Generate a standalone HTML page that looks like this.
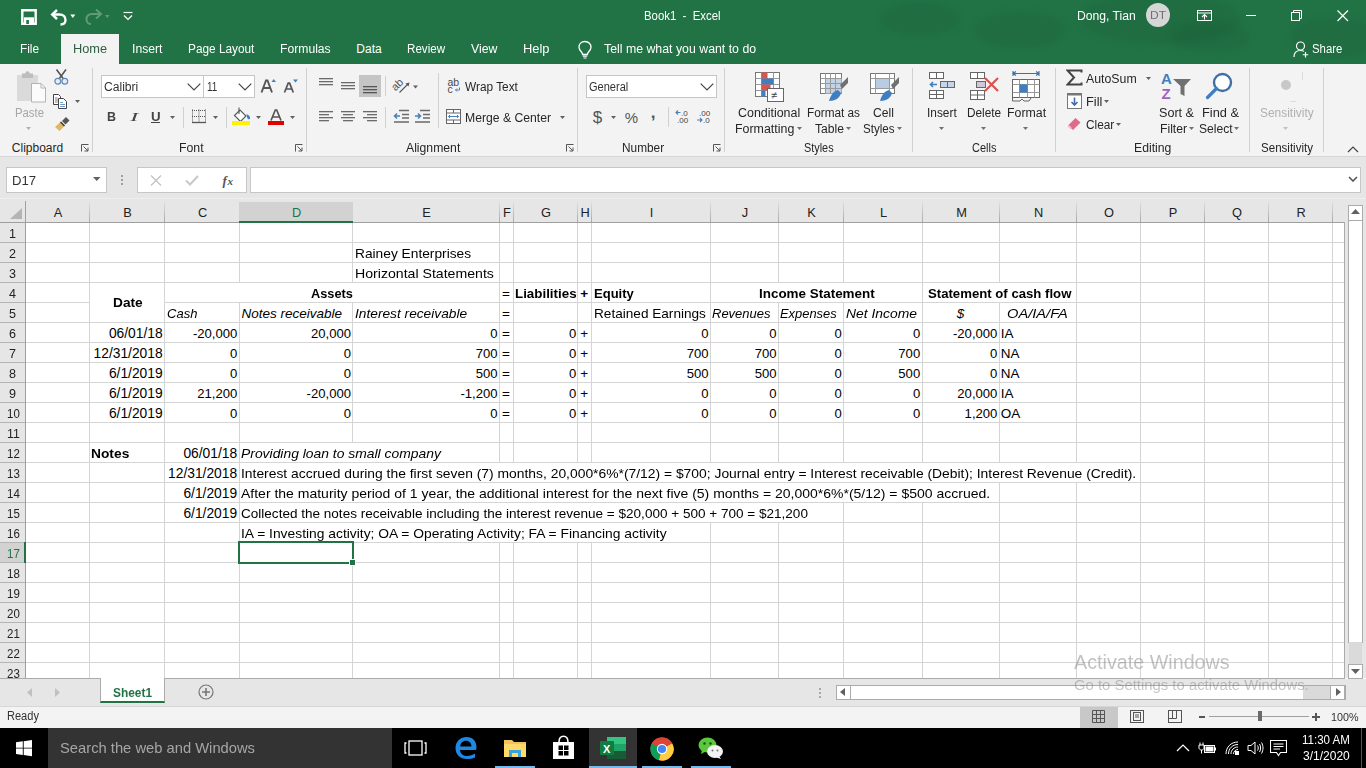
<!DOCTYPE html>
<html><head><meta charset="utf-8"><title>Book1 - Excel</title>
<style>
html,body{margin:0;padding:0;width:1366px;height:768px;overflow:hidden;background:#fff;position:relative;font-family:"Liberation Sans",sans-serif;}
</style></head><body>
<div style="position:absolute;left:0px;top:0px;width:1366px;height:64px;background:#217346;"></div>
<div style="position:absolute;left:880px;top:2px;width:80px;height:34px;border-radius:50%;background:rgba(20,70,40,0.13);filter:blur(3px);"></div>
<div style="position:absolute;left:975px;top:12px;width:90px;height:36px;border-radius:50%;background:rgba(20,70,40,0.13);filter:blur(3px);"></div>
<div style="position:absolute;left:1080px;top:-6px;width:160px;height:50px;border-radius:50%;background:rgba(20,70,40,0.13);filter:blur(3px);"></div>
<div style="position:absolute;left:1170px;top:22px;width:80px;height:30px;border-radius:50%;background:rgba(20,70,40,0.13);filter:blur(3px);"></div>
<div style="position:absolute;left:1290px;top:18px;width:90px;height:40px;border-radius:50%;background:rgba(20,70,40,0.13);filter:blur(3px);"></div>
<div style="position:absolute;left:0px;top:64px;width:1366px;height:92px;background:#f3f3f3;"></div>
<div style="position:absolute;left:0px;top:156px;width:1366px;height:1px;background:#d5d5d5;"></div>
<div style="position:absolute;left:0px;top:157px;width:1366px;height:43px;background:#e6e6e6;"></div>
<div style="position:absolute;left:0px;top:200px;width:1366px;height:23px;background:#e6e6e6;"></div>
<div style="position:absolute;left:26px;top:223px;width:1318px;height:455px;background:#ffffff;"></div>
<div style="position:absolute;left:0px;top:223px;width:25px;height:455px;background:#e6e6e6;"></div>
<div style="position:absolute;left:89px;top:223px;width:1px;height:455px;background:#d5d5d5;"></div>
<div style="position:absolute;left:164px;top:223px;width:1px;height:455px;background:#d5d5d5;"></div>
<div style="position:absolute;left:239px;top:223px;width:1px;height:60px;background:#d5d5d5;"></div>
<div style="position:absolute;left:239px;top:303px;width:1px;height:375px;background:#d5d5d5;"></div>
<div style="position:absolute;left:352px;top:223px;width:1px;height:60px;background:#d5d5d5;"></div>
<div style="position:absolute;left:352px;top:303px;width:1px;height:140px;background:#d5d5d5;"></div>
<div style="position:absolute;left:352px;top:543px;width:1px;height:135px;background:#d5d5d5;"></div>
<div style="position:absolute;left:499px;top:223px;width:1px;height:240px;background:#d5d5d5;"></div>
<div style="position:absolute;left:499px;top:543px;width:1px;height:135px;background:#d5d5d5;"></div>
<div style="position:absolute;left:513px;top:223px;width:1px;height:240px;background:#d5d5d5;"></div>
<div style="position:absolute;left:513px;top:543px;width:1px;height:135px;background:#d5d5d5;"></div>
<div style="position:absolute;left:577px;top:223px;width:1px;height:240px;background:#d5d5d5;"></div>
<div style="position:absolute;left:577px;top:543px;width:1px;height:135px;background:#d5d5d5;"></div>
<div style="position:absolute;left:591px;top:223px;width:1px;height:240px;background:#d5d5d5;"></div>
<div style="position:absolute;left:591px;top:543px;width:1px;height:135px;background:#d5d5d5;"></div>
<div style="position:absolute;left:710px;top:223px;width:1px;height:240px;background:#d5d5d5;"></div>
<div style="position:absolute;left:710px;top:523px;width:1px;height:155px;background:#d5d5d5;"></div>
<div style="position:absolute;left:778px;top:223px;width:1px;height:60px;background:#d5d5d5;"></div>
<div style="position:absolute;left:778px;top:303px;width:1px;height:160px;background:#d5d5d5;"></div>
<div style="position:absolute;left:778px;top:523px;width:1px;height:155px;background:#d5d5d5;"></div>
<div style="position:absolute;left:843px;top:223px;width:1px;height:60px;background:#d5d5d5;"></div>
<div style="position:absolute;left:843px;top:303px;width:1px;height:160px;background:#d5d5d5;"></div>
<div style="position:absolute;left:843px;top:503px;width:1px;height:175px;background:#d5d5d5;"></div>
<div style="position:absolute;left:922px;top:223px;width:1px;height:240px;background:#d5d5d5;"></div>
<div style="position:absolute;left:922px;top:503px;width:1px;height:175px;background:#d5d5d5;"></div>
<div style="position:absolute;left:999px;top:223px;width:1px;height:60px;background:#d5d5d5;"></div>
<div style="position:absolute;left:999px;top:303px;width:1px;height:160px;background:#d5d5d5;"></div>
<div style="position:absolute;left:999px;top:483px;width:1px;height:195px;background:#d5d5d5;"></div>
<div style="position:absolute;left:1076px;top:223px;width:1px;height:240px;background:#d5d5d5;"></div>
<div style="position:absolute;left:1076px;top:483px;width:1px;height:195px;background:#d5d5d5;"></div>
<div style="position:absolute;left:1140px;top:223px;width:1px;height:455px;background:#d5d5d5;"></div>
<div style="position:absolute;left:1204px;top:223px;width:1px;height:455px;background:#d5d5d5;"></div>
<div style="position:absolute;left:1268px;top:223px;width:1px;height:455px;background:#d5d5d5;"></div>
<div style="position:absolute;left:1332px;top:223px;width:1px;height:455px;background:#d5d5d5;"></div>
<div style="position:absolute;left:26px;top:242px;width:1318px;height:1px;background:#d5d5d5;"></div>
<div style="position:absolute;left:26px;top:262px;width:1318px;height:1px;background:#d5d5d5;"></div>
<div style="position:absolute;left:26px;top:282px;width:1318px;height:1px;background:#d5d5d5;"></div>
<div style="position:absolute;left:26px;top:302px;width:64px;height:1px;background:#d5d5d5;"></div>
<div style="position:absolute;left:165px;top:302px;width:1179px;height:1px;background:#d5d5d5;"></div>
<div style="position:absolute;left:26px;top:322px;width:1318px;height:1px;background:#d5d5d5;"></div>
<div style="position:absolute;left:26px;top:342px;width:1318px;height:1px;background:#d5d5d5;"></div>
<div style="position:absolute;left:26px;top:362px;width:1318px;height:1px;background:#d5d5d5;"></div>
<div style="position:absolute;left:26px;top:382px;width:1318px;height:1px;background:#d5d5d5;"></div>
<div style="position:absolute;left:26px;top:402px;width:1318px;height:1px;background:#d5d5d5;"></div>
<div style="position:absolute;left:26px;top:422px;width:1318px;height:1px;background:#d5d5d5;"></div>
<div style="position:absolute;left:26px;top:442px;width:1318px;height:1px;background:#d5d5d5;"></div>
<div style="position:absolute;left:26px;top:462px;width:1318px;height:1px;background:#d5d5d5;"></div>
<div style="position:absolute;left:26px;top:482px;width:1318px;height:1px;background:#d5d5d5;"></div>
<div style="position:absolute;left:26px;top:502px;width:1318px;height:1px;background:#d5d5d5;"></div>
<div style="position:absolute;left:26px;top:522px;width:1318px;height:1px;background:#d5d5d5;"></div>
<div style="position:absolute;left:26px;top:542px;width:1318px;height:1px;background:#d5d5d5;"></div>
<div style="position:absolute;left:26px;top:562px;width:1318px;height:1px;background:#d5d5d5;"></div>
<div style="position:absolute;left:26px;top:582px;width:1318px;height:1px;background:#d5d5d5;"></div>
<div style="position:absolute;left:26px;top:602px;width:1318px;height:1px;background:#d5d5d5;"></div>
<div style="position:absolute;left:26px;top:622px;width:1318px;height:1px;background:#d5d5d5;"></div>
<div style="position:absolute;left:26px;top:642px;width:1318px;height:1px;background:#d5d5d5;"></div>
<div style="position:absolute;left:26px;top:662px;width:1318px;height:1px;background:#d5d5d5;"></div>
<div style="position:absolute;left:0px;top:198px;width:1366px;height:1px;background:#eeeeee;"></div>
<div style="position:absolute;left:89px;top:201px;width:1px;height:21px;background:linear-gradient(#e2e2e2,#a9a9a9);"></div>
<div style="position:absolute;left:164px;top:201px;width:1px;height:21px;background:linear-gradient(#e2e2e2,#a9a9a9);"></div>
<div style="position:absolute;left:239px;top:201px;width:1px;height:21px;background:linear-gradient(#e2e2e2,#a9a9a9);"></div>
<div style="position:absolute;left:352px;top:201px;width:1px;height:21px;background:linear-gradient(#e2e2e2,#a9a9a9);"></div>
<div style="position:absolute;left:499px;top:201px;width:1px;height:21px;background:linear-gradient(#e2e2e2,#a9a9a9);"></div>
<div style="position:absolute;left:513px;top:201px;width:1px;height:21px;background:linear-gradient(#e2e2e2,#a9a9a9);"></div>
<div style="position:absolute;left:577px;top:201px;width:1px;height:21px;background:linear-gradient(#e2e2e2,#a9a9a9);"></div>
<div style="position:absolute;left:591px;top:201px;width:1px;height:21px;background:linear-gradient(#e2e2e2,#a9a9a9);"></div>
<div style="position:absolute;left:710px;top:201px;width:1px;height:21px;background:linear-gradient(#e2e2e2,#a9a9a9);"></div>
<div style="position:absolute;left:778px;top:201px;width:1px;height:21px;background:linear-gradient(#e2e2e2,#a9a9a9);"></div>
<div style="position:absolute;left:843px;top:201px;width:1px;height:21px;background:linear-gradient(#e2e2e2,#a9a9a9);"></div>
<div style="position:absolute;left:922px;top:201px;width:1px;height:21px;background:linear-gradient(#e2e2e2,#a9a9a9);"></div>
<div style="position:absolute;left:999px;top:201px;width:1px;height:21px;background:linear-gradient(#e2e2e2,#a9a9a9);"></div>
<div style="position:absolute;left:1076px;top:201px;width:1px;height:21px;background:linear-gradient(#e2e2e2,#a9a9a9);"></div>
<div style="position:absolute;left:1140px;top:201px;width:1px;height:21px;background:linear-gradient(#e2e2e2,#a9a9a9);"></div>
<div style="position:absolute;left:1204px;top:201px;width:1px;height:21px;background:linear-gradient(#e2e2e2,#a9a9a9);"></div>
<div style="position:absolute;left:1268px;top:201px;width:1px;height:21px;background:linear-gradient(#e2e2e2,#a9a9a9);"></div>
<div style="position:absolute;left:1332px;top:201px;width:1px;height:21px;background:linear-gradient(#e2e2e2,#a9a9a9);"></div>
<div style="position:absolute;left:0px;top:222px;width:1344px;height:1px;background:#9f9f9f;"></div>
<div style="position:absolute;left:25px;top:201px;width:1px;height:477px;background:#9f9f9f;"></div>
<div style="position:absolute;left:0px;top:242px;width:25px;height:1px;background:#b4b4b4;"></div>
<div style="position:absolute;left:0px;top:262px;width:25px;height:1px;background:#b4b4b4;"></div>
<div style="position:absolute;left:0px;top:282px;width:25px;height:1px;background:#b4b4b4;"></div>
<div style="position:absolute;left:0px;top:302px;width:25px;height:1px;background:#b4b4b4;"></div>
<div style="position:absolute;left:0px;top:322px;width:25px;height:1px;background:#b4b4b4;"></div>
<div style="position:absolute;left:0px;top:342px;width:25px;height:1px;background:#b4b4b4;"></div>
<div style="position:absolute;left:0px;top:362px;width:25px;height:1px;background:#b4b4b4;"></div>
<div style="position:absolute;left:0px;top:382px;width:25px;height:1px;background:#b4b4b4;"></div>
<div style="position:absolute;left:0px;top:402px;width:25px;height:1px;background:#b4b4b4;"></div>
<div style="position:absolute;left:0px;top:422px;width:25px;height:1px;background:#b4b4b4;"></div>
<div style="position:absolute;left:0px;top:442px;width:25px;height:1px;background:#b4b4b4;"></div>
<div style="position:absolute;left:0px;top:462px;width:25px;height:1px;background:#b4b4b4;"></div>
<div style="position:absolute;left:0px;top:482px;width:25px;height:1px;background:#b4b4b4;"></div>
<div style="position:absolute;left:0px;top:502px;width:25px;height:1px;background:#b4b4b4;"></div>
<div style="position:absolute;left:0px;top:522px;width:25px;height:1px;background:#b4b4b4;"></div>
<div style="position:absolute;left:0px;top:542px;width:25px;height:1px;background:#b4b4b4;"></div>
<div style="position:absolute;left:0px;top:562px;width:25px;height:1px;background:#b4b4b4;"></div>
<div style="position:absolute;left:0px;top:582px;width:25px;height:1px;background:#b4b4b4;"></div>
<div style="position:absolute;left:0px;top:602px;width:25px;height:1px;background:#b4b4b4;"></div>
<div style="position:absolute;left:0px;top:622px;width:25px;height:1px;background:#b4b4b4;"></div>
<div style="position:absolute;left:0px;top:642px;width:25px;height:1px;background:#b4b4b4;"></div>
<div style="position:absolute;left:0px;top:662px;width:25px;height:1px;background:#b4b4b4;"></div>
<div style="position:absolute;left:1344px;top:222px;width:1px;height:456px;background:#ababab;"></div>
<div style="position:absolute;left:0px;top:678px;width:1345px;height:1px;background:#ababab;"></div>
<div style="position:absolute;left:239px;top:202px;width:114px;height:19px;background:#d2d2d2;"></div>
<div style="position:absolute;left:239px;top:221px;width:114px;height:2px;background:#217346;"></div>
<div style="position:absolute;left:0px;top:543px;width:24px;height:19px;background:#d2d2d2;"></div>
<div style="position:absolute;left:24px;top:542px;width:2px;height:21px;background:#217346;"></div>
<svg style="position:absolute;left:9px;top:207px;" width="14" height="13" viewBox="0 0 14 13"><path d="M13 1 L13 12 L1 12 Z" fill="#b4b4b4"/></svg>
<div style="position:absolute;left:53.73px;top:204.00px;line-height:17px;color:#222;font-family:'Liberation Sans',sans-serif;font-size:12.8px;font-weight:400;font-style:normal;white-space:pre;">A</div>
<div style="position:absolute;left:123.23px;top:204.00px;line-height:17px;color:#222;font-family:'Liberation Sans',sans-serif;font-size:12.8px;font-weight:400;font-style:normal;white-space:pre;">B</div>
<div style="position:absolute;left:197.88px;top:204.00px;line-height:17px;color:#222;font-family:'Liberation Sans',sans-serif;font-size:12.8px;font-weight:400;font-style:normal;white-space:pre;">C</div>
<div style="position:absolute;left:291.88px;top:204.00px;line-height:17px;color:#217346;font-family:'Liberation Sans',sans-serif;font-size:12.8px;font-weight:400;font-style:normal;white-space:pre;">D</div>
<div style="position:absolute;left:422.23px;top:204.00px;line-height:17px;color:#222;font-family:'Liberation Sans',sans-serif;font-size:12.8px;font-weight:400;font-style:normal;white-space:pre;">E</div>
<div style="position:absolute;left:503.09px;top:204.00px;line-height:17px;color:#222;font-family:'Liberation Sans',sans-serif;font-size:12.8px;font-weight:400;font-style:normal;white-space:pre;">F</div>
<div style="position:absolute;left:541.02px;top:204.00px;line-height:17px;color:#222;font-family:'Liberation Sans',sans-serif;font-size:12.8px;font-weight:400;font-style:normal;white-space:pre;">G</div>
<div style="position:absolute;left:580.38px;top:204.00px;line-height:17px;color:#222;font-family:'Liberation Sans',sans-serif;font-size:12.8px;font-weight:400;font-style:normal;white-space:pre;">H</div>
<div style="position:absolute;left:649.72px;top:204.00px;line-height:17px;color:#222;font-family:'Liberation Sans',sans-serif;font-size:12.8px;font-weight:400;font-style:normal;white-space:pre;">I</div>
<div style="position:absolute;left:741.80px;top:204.00px;line-height:17px;color:#222;font-family:'Liberation Sans',sans-serif;font-size:12.8px;font-weight:400;font-style:normal;white-space:pre;">J</div>
<div style="position:absolute;left:807.23px;top:204.00px;line-height:17px;color:#222;font-family:'Liberation Sans',sans-serif;font-size:12.8px;font-weight:400;font-style:normal;white-space:pre;">K</div>
<div style="position:absolute;left:879.94px;top:204.00px;line-height:17px;color:#222;font-family:'Liberation Sans',sans-serif;font-size:12.8px;font-weight:400;font-style:normal;white-space:pre;">L</div>
<div style="position:absolute;left:956.16px;top:204.00px;line-height:17px;color:#222;font-family:'Liberation Sans',sans-serif;font-size:12.8px;font-weight:400;font-style:normal;white-space:pre;">M</div>
<div style="position:absolute;left:1033.88px;top:204.00px;line-height:17px;color:#222;font-family:'Liberation Sans',sans-serif;font-size:12.8px;font-weight:400;font-style:normal;white-space:pre;">N</div>
<div style="position:absolute;left:1104.02px;top:204.00px;line-height:17px;color:#222;font-family:'Liberation Sans',sans-serif;font-size:12.8px;font-weight:400;font-style:normal;white-space:pre;">O</div>
<div style="position:absolute;left:1168.73px;top:204.00px;line-height:17px;color:#222;font-family:'Liberation Sans',sans-serif;font-size:12.8px;font-weight:400;font-style:normal;white-space:pre;">P</div>
<div style="position:absolute;left:1232.02px;top:204.00px;line-height:17px;color:#222;font-family:'Liberation Sans',sans-serif;font-size:12.8px;font-weight:400;font-style:normal;white-space:pre;">Q</div>
<div style="position:absolute;left:1296.38px;top:204.00px;line-height:17px;color:#222;font-family:'Liberation Sans',sans-serif;font-size:12.8px;font-weight:400;font-style:normal;white-space:pre;">R</div>
<div style="position:absolute;left:9.10px;top:225.00px;line-height:17px;color:#222;font-family:'Liberation Sans',sans-serif;font-size:12.8px;font-weight:400;font-style:normal;white-space:pre;transform:scaleX(0.9825);transform-origin:left top;">1</div>
<div style="position:absolute;left:9.10px;top:245.00px;line-height:17px;color:#222;font-family:'Liberation Sans',sans-serif;font-size:12.8px;font-weight:400;font-style:normal;white-space:pre;transform:scaleX(0.9825);transform-origin:left top;">2</div>
<div style="position:absolute;left:9.10px;top:265.00px;line-height:17px;color:#222;font-family:'Liberation Sans',sans-serif;font-size:12.8px;font-weight:400;font-style:normal;white-space:pre;transform:scaleX(0.9825);transform-origin:left top;">3</div>
<div style="position:absolute;left:9.10px;top:285.00px;line-height:17px;color:#222;font-family:'Liberation Sans',sans-serif;font-size:12.8px;font-weight:400;font-style:normal;white-space:pre;transform:scaleX(0.9825);transform-origin:left top;">4</div>
<div style="position:absolute;left:9.10px;top:305.00px;line-height:17px;color:#222;font-family:'Liberation Sans',sans-serif;font-size:12.8px;font-weight:400;font-style:normal;white-space:pre;transform:scaleX(0.9825);transform-origin:left top;">5</div>
<div style="position:absolute;left:9.10px;top:325.00px;line-height:17px;color:#222;font-family:'Liberation Sans',sans-serif;font-size:12.8px;font-weight:400;font-style:normal;white-space:pre;transform:scaleX(0.9825);transform-origin:left top;">6</div>
<div style="position:absolute;left:9.10px;top:345.00px;line-height:17px;color:#222;font-family:'Liberation Sans',sans-serif;font-size:12.8px;font-weight:400;font-style:normal;white-space:pre;transform:scaleX(0.9825);transform-origin:left top;">7</div>
<div style="position:absolute;left:9.10px;top:365.00px;line-height:17px;color:#222;font-family:'Liberation Sans',sans-serif;font-size:12.8px;font-weight:400;font-style:normal;white-space:pre;transform:scaleX(0.9825);transform-origin:left top;">8</div>
<div style="position:absolute;left:9.10px;top:385.00px;line-height:17px;color:#222;font-family:'Liberation Sans',sans-serif;font-size:12.8px;font-weight:400;font-style:normal;white-space:pre;transform:scaleX(0.9825);transform-origin:left top;">9</div>
<div style="position:absolute;left:6.80px;top:405.00px;line-height:17px;color:#222;font-family:'Liberation Sans',sans-serif;font-size:12.8px;font-weight:400;font-style:normal;white-space:pre;transform:scaleX(0.8992);transform-origin:left top;">10</div>
<div style="position:absolute;left:6.80px;top:425.00px;line-height:17px;color:#222;font-family:'Liberation Sans',sans-serif;font-size:12.8px;font-weight:400;font-style:normal;white-space:pre;transform:scaleX(0.9626);transform-origin:left top;">11</div>
<div style="position:absolute;left:6.80px;top:445.00px;line-height:17px;color:#222;font-family:'Liberation Sans',sans-serif;font-size:12.8px;font-weight:400;font-style:normal;white-space:pre;transform:scaleX(0.8992);transform-origin:left top;">12</div>
<div style="position:absolute;left:6.80px;top:465.00px;line-height:17px;color:#222;font-family:'Liberation Sans',sans-serif;font-size:12.8px;font-weight:400;font-style:normal;white-space:pre;transform:scaleX(0.8992);transform-origin:left top;">13</div>
<div style="position:absolute;left:6.80px;top:485.00px;line-height:17px;color:#222;font-family:'Liberation Sans',sans-serif;font-size:12.8px;font-weight:400;font-style:normal;white-space:pre;transform:scaleX(0.8992);transform-origin:left top;">14</div>
<div style="position:absolute;left:6.80px;top:505.00px;line-height:17px;color:#222;font-family:'Liberation Sans',sans-serif;font-size:12.8px;font-weight:400;font-style:normal;white-space:pre;transform:scaleX(0.8992);transform-origin:left top;">15</div>
<div style="position:absolute;left:6.80px;top:525.00px;line-height:17px;color:#222;font-family:'Liberation Sans',sans-serif;font-size:12.8px;font-weight:400;font-style:normal;white-space:pre;transform:scaleX(0.8992);transform-origin:left top;">16</div>
<div style="position:absolute;left:6.80px;top:545.00px;line-height:17px;color:#217346;font-family:'Liberation Sans',sans-serif;font-size:12.8px;font-weight:400;font-style:normal;white-space:pre;transform:scaleX(0.8992);transform-origin:left top;">17</div>
<div style="position:absolute;left:6.80px;top:565.00px;line-height:17px;color:#222;font-family:'Liberation Sans',sans-serif;font-size:12.8px;font-weight:400;font-style:normal;white-space:pre;transform:scaleX(0.8992);transform-origin:left top;">18</div>
<div style="position:absolute;left:6.80px;top:585.00px;line-height:17px;color:#222;font-family:'Liberation Sans',sans-serif;font-size:12.8px;font-weight:400;font-style:normal;white-space:pre;transform:scaleX(0.8992);transform-origin:left top;">19</div>
<div style="position:absolute;left:6.80px;top:605.00px;line-height:17px;color:#222;font-family:'Liberation Sans',sans-serif;font-size:12.8px;font-weight:400;font-style:normal;white-space:pre;transform:scaleX(0.8992);transform-origin:left top;">20</div>
<div style="position:absolute;left:6.80px;top:625.00px;line-height:17px;color:#222;font-family:'Liberation Sans',sans-serif;font-size:12.8px;font-weight:400;font-style:normal;white-space:pre;transform:scaleX(0.8992);transform-origin:left top;">21</div>
<div style="position:absolute;left:6.80px;top:645.00px;line-height:17px;color:#222;font-family:'Liberation Sans',sans-serif;font-size:12.8px;font-weight:400;font-style:normal;white-space:pre;transform:scaleX(0.8992);transform-origin:left top;">22</div>
<div style="position:absolute;left:6.80px;top:665.00px;line-height:17px;color:#222;font-family:'Liberation Sans',sans-serif;font-size:12.8px;font-weight:400;font-style:normal;white-space:pre;transform:scaleX(0.8992);transform-origin:left top;">23</div>
<div style="position:absolute;left:1345px;top:200px;width:21px;height:478px;background:#e6e6e6;"></div>
<div style="position:absolute;left:354.50px;top:245.00px;line-height:18px;color:#000;font-family:'Liberation Sans',sans-serif;font-size:13.5px;font-weight:400;font-style:normal;white-space:pre;transform:scaleX(1.0179);transform-origin:left top;">Rainey Enterprises</div>
<div style="position:absolute;left:354.50px;top:265.00px;line-height:18px;color:#000;font-family:'Liberation Sans',sans-serif;font-size:13.5px;font-weight:400;font-style:normal;white-space:pre;transform:scaleX(1.0458);transform-origin:left top;">Horizontal Statements</div>
<div style="position:absolute;left:311.00px;top:285.00px;line-height:18px;color:#000;font-family:'Liberation Sans',sans-serif;font-size:13.5px;font-weight:700;font-style:normal;white-space:pre;transform:scaleX(0.9440);transform-origin:left top;">Assets</div>
<div style="position:absolute;left:112.50px;top:294.00px;line-height:18px;color:#000;font-family:'Liberation Sans',sans-serif;font-size:13.5px;font-weight:700;font-style:normal;white-space:pre;transform:scaleX(1.0148);transform-origin:left top;">Date</div>
<div style="position:absolute;left:502.05px;top:285.00px;line-height:18px;color:#000;font-family:'Liberation Sans',sans-serif;font-size:13.5px;font-weight:400;font-style:normal;white-space:pre;">=</div>
<div style="position:absolute;left:515.10px;top:285.00px;line-height:18px;color:#000;font-family:'Liberation Sans',sans-serif;font-size:13.5px;font-weight:700;font-style:normal;white-space:pre;transform:scaleX(0.9891);transform-origin:left top;">Liabilities</div>
<div style="position:absolute;left:580.15px;top:285.00px;line-height:18px;color:#000;font-family:'Liberation Sans',sans-serif;font-size:13.5px;font-weight:700;font-style:normal;white-space:pre;">+</div>
<div style="position:absolute;left:593.60px;top:285.00px;line-height:18px;color:#000;font-family:'Liberation Sans',sans-serif;font-size:13.5px;font-weight:700;font-style:normal;white-space:pre;transform:scaleX(0.9645);transform-origin:left top;">Equity</div>
<div style="position:absolute;left:759.00px;top:285.00px;line-height:18px;color:#000;font-family:'Liberation Sans',sans-serif;font-size:13.5px;font-weight:700;font-style:normal;white-space:pre;transform:scaleX(0.9950);transform-origin:left top;">Income Statement</div>
<div style="position:absolute;left:928.00px;top:285.00px;line-height:18px;color:#000;font-family:'Liberation Sans',sans-serif;font-size:13.5px;font-weight:700;font-style:normal;white-space:pre;transform:scaleX(0.9753);transform-origin:left top;">Statement of cash flow</div>
<div style="position:absolute;left:166.70px;top:305.00px;line-height:18px;color:#000;font-family:'Liberation Sans',sans-serif;font-size:13.5px;font-weight:400;font-style:italic;white-space:pre;transform:scaleX(0.9646);transform-origin:left top;">Cash</div>
<div style="position:absolute;left:241.50px;top:305.00px;line-height:18px;color:#000;font-family:'Liberation Sans',sans-serif;font-size:13.5px;font-weight:400;font-style:italic;white-space:pre;">Notes receivable</div>
<div style="position:absolute;left:354.50px;top:305.00px;line-height:18px;color:#000;font-family:'Liberation Sans',sans-serif;font-size:13.5px;font-weight:400;font-style:italic;white-space:pre;transform:scaleX(1.0162);transform-origin:left top;">Interest receivable</div>
<div style="position:absolute;left:502.05px;top:305.00px;line-height:18px;color:#000;font-family:'Liberation Sans',sans-serif;font-size:13.5px;font-weight:400;font-style:normal;white-space:pre;">=</div>
<div style="position:absolute;left:593.60px;top:305.00px;line-height:18px;color:#000;font-family:'Liberation Sans',sans-serif;font-size:13.5px;font-weight:400;font-style:normal;white-space:pre;transform:scaleX(1.0074);transform-origin:left top;">Retained Earnings</div>
<div style="position:absolute;left:712.30px;top:305.00px;line-height:18px;color:#000;font-family:'Liberation Sans',sans-serif;font-size:13.5px;font-weight:400;font-style:italic;white-space:pre;transform:scaleX(0.9622);transform-origin:left top;">Revenues</div>
<div style="position:absolute;left:780.30px;top:305.00px;line-height:18px;color:#000;font-family:'Liberation Sans',sans-serif;font-size:13.5px;font-weight:400;font-style:italic;white-space:pre;transform:scaleX(0.9562);transform-origin:left top;">Expenses</div>
<div style="position:absolute;left:845.60px;top:305.00px;line-height:18px;color:#000;font-family:'Liberation Sans',sans-serif;font-size:13.5px;font-weight:400;font-style:italic;white-space:pre;transform:scaleX(1.0271);transform-origin:left top;">Net Income</div>
<div style="position:absolute;left:956.79px;top:305.00px;line-height:18px;color:#000;font-family:'Liberation Sans',sans-serif;font-size:13.5px;font-weight:400;font-style:italic;white-space:pre;">$</div>
<div style="position:absolute;left:1006.50px;top:305.00px;line-height:18px;color:#000;font-family:'Liberation Sans',sans-serif;font-size:13.5px;font-weight:400;font-style:italic;white-space:pre;transform:scaleX(1.0854);transform-origin:left top;">OA/IA/FA</div>
<div style="position:absolute;left:108.88px;top:325.00px;line-height:18px;color:#000;font-family:'Liberation Sans',sans-serif;font-size:13.8px;font-weight:400;font-style:normal;white-space:pre;">06/01/18</div>
<div style="position:absolute;left:192.88px;top:325.00px;line-height:17px;color:#000;font-family:'Liberation Sans',sans-serif;font-size:13.1px;font-weight:400;font-style:normal;white-space:pre;">-20,000</div>
<div style="position:absolute;left:310.94px;top:325.00px;line-height:17px;color:#000;font-family:'Liberation Sans',sans-serif;font-size:13.1px;font-weight:400;font-style:normal;white-space:pre;">20,000</div>
<div style="position:absolute;left:490.30px;top:325.00px;line-height:17px;color:#000;font-family:'Liberation Sans',sans-serif;font-size:13.1px;font-weight:400;font-style:normal;white-space:pre;">0</div>
<div style="position:absolute;left:569.00px;top:325.00px;line-height:17px;color:#000;font-family:'Liberation Sans',sans-serif;font-size:13.1px;font-weight:400;font-style:normal;white-space:pre;">0</div>
<div style="position:absolute;left:701.20px;top:325.00px;line-height:17px;color:#000;font-family:'Liberation Sans',sans-serif;font-size:13.1px;font-weight:400;font-style:normal;white-space:pre;">0</div>
<div style="position:absolute;left:769.20px;top:325.00px;line-height:17px;color:#000;font-family:'Liberation Sans',sans-serif;font-size:13.1px;font-weight:400;font-style:normal;white-space:pre;">0</div>
<div style="position:absolute;left:834.50px;top:325.00px;line-height:17px;color:#000;font-family:'Liberation Sans',sans-serif;font-size:13.1px;font-weight:400;font-style:normal;white-space:pre;">0</div>
<div style="position:absolute;left:912.90px;top:325.00px;line-height:17px;color:#000;font-family:'Liberation Sans',sans-serif;font-size:13.1px;font-weight:400;font-style:normal;white-space:pre;">0</div>
<div style="position:absolute;left:952.98px;top:325.00px;line-height:17px;color:#000;font-family:'Liberation Sans',sans-serif;font-size:13.1px;font-weight:400;font-style:normal;white-space:pre;">-20,000</div>
<div style="position:absolute;left:502.05px;top:325.00px;line-height:18px;color:#000;font-family:'Liberation Sans',sans-serif;font-size:13.5px;font-weight:400;font-style:normal;white-space:pre;">=</div>
<div style="position:absolute;left:580.15px;top:325.00px;line-height:18px;color:#000;font-family:'Liberation Sans',sans-serif;font-size:13.5px;font-weight:400;font-style:normal;white-space:pre;">+</div>
<div style="position:absolute;left:1000.70px;top:325.00px;line-height:18px;color:#000;font-family:'Liberation Sans',sans-serif;font-size:13.5px;font-weight:400;font-style:normal;white-space:pre;">IA</div>
<div style="position:absolute;left:93.54px;top:345.00px;line-height:18px;color:#000;font-family:'Liberation Sans',sans-serif;font-size:13.8px;font-weight:400;font-style:normal;white-space:pre;">12/31/2018</div>
<div style="position:absolute;left:230.00px;top:345.00px;line-height:17px;color:#000;font-family:'Liberation Sans',sans-serif;font-size:13.1px;font-weight:400;font-style:normal;white-space:pre;">0</div>
<div style="position:absolute;left:343.70px;top:345.00px;line-height:17px;color:#000;font-family:'Liberation Sans',sans-serif;font-size:13.1px;font-weight:400;font-style:normal;white-space:pre;">0</div>
<div style="position:absolute;left:475.74px;top:345.00px;line-height:17px;color:#000;font-family:'Liberation Sans',sans-serif;font-size:13.1px;font-weight:400;font-style:normal;white-space:pre;">700</div>
<div style="position:absolute;left:569.00px;top:345.00px;line-height:17px;color:#000;font-family:'Liberation Sans',sans-serif;font-size:13.1px;font-weight:400;font-style:normal;white-space:pre;">0</div>
<div style="position:absolute;left:686.64px;top:345.00px;line-height:17px;color:#000;font-family:'Liberation Sans',sans-serif;font-size:13.1px;font-weight:400;font-style:normal;white-space:pre;">700</div>
<div style="position:absolute;left:754.64px;top:345.00px;line-height:17px;color:#000;font-family:'Liberation Sans',sans-serif;font-size:13.1px;font-weight:400;font-style:normal;white-space:pre;">700</div>
<div style="position:absolute;left:834.50px;top:345.00px;line-height:17px;color:#000;font-family:'Liberation Sans',sans-serif;font-size:13.1px;font-weight:400;font-style:normal;white-space:pre;">0</div>
<div style="position:absolute;left:898.34px;top:345.00px;line-height:17px;color:#000;font-family:'Liberation Sans',sans-serif;font-size:13.1px;font-weight:400;font-style:normal;white-space:pre;">700</div>
<div style="position:absolute;left:990.10px;top:345.00px;line-height:17px;color:#000;font-family:'Liberation Sans',sans-serif;font-size:13.1px;font-weight:400;font-style:normal;white-space:pre;">0</div>
<div style="position:absolute;left:502.05px;top:345.00px;line-height:18px;color:#000;font-family:'Liberation Sans',sans-serif;font-size:13.5px;font-weight:400;font-style:normal;white-space:pre;">=</div>
<div style="position:absolute;left:580.15px;top:345.00px;line-height:18px;color:#000;font-family:'Liberation Sans',sans-serif;font-size:13.5px;font-weight:400;font-style:normal;white-space:pre;">+</div>
<div style="position:absolute;left:1000.70px;top:345.00px;line-height:18px;color:#000;font-family:'Liberation Sans',sans-serif;font-size:13.5px;font-weight:400;font-style:normal;white-space:pre;">NA</div>
<div style="position:absolute;left:108.88px;top:365.00px;line-height:18px;color:#000;font-family:'Liberation Sans',sans-serif;font-size:13.8px;font-weight:400;font-style:normal;white-space:pre;">6/1/2019</div>
<div style="position:absolute;left:230.00px;top:365.00px;line-height:17px;color:#000;font-family:'Liberation Sans',sans-serif;font-size:13.1px;font-weight:400;font-style:normal;white-space:pre;">0</div>
<div style="position:absolute;left:343.70px;top:365.00px;line-height:17px;color:#000;font-family:'Liberation Sans',sans-serif;font-size:13.1px;font-weight:400;font-style:normal;white-space:pre;">0</div>
<div style="position:absolute;left:475.74px;top:365.00px;line-height:17px;color:#000;font-family:'Liberation Sans',sans-serif;font-size:13.1px;font-weight:400;font-style:normal;white-space:pre;">500</div>
<div style="position:absolute;left:569.00px;top:365.00px;line-height:17px;color:#000;font-family:'Liberation Sans',sans-serif;font-size:13.1px;font-weight:400;font-style:normal;white-space:pre;">0</div>
<div style="position:absolute;left:686.64px;top:365.00px;line-height:17px;color:#000;font-family:'Liberation Sans',sans-serif;font-size:13.1px;font-weight:400;font-style:normal;white-space:pre;">500</div>
<div style="position:absolute;left:754.64px;top:365.00px;line-height:17px;color:#000;font-family:'Liberation Sans',sans-serif;font-size:13.1px;font-weight:400;font-style:normal;white-space:pre;">500</div>
<div style="position:absolute;left:834.50px;top:365.00px;line-height:17px;color:#000;font-family:'Liberation Sans',sans-serif;font-size:13.1px;font-weight:400;font-style:normal;white-space:pre;">0</div>
<div style="position:absolute;left:898.34px;top:365.00px;line-height:17px;color:#000;font-family:'Liberation Sans',sans-serif;font-size:13.1px;font-weight:400;font-style:normal;white-space:pre;">500</div>
<div style="position:absolute;left:990.10px;top:365.00px;line-height:17px;color:#000;font-family:'Liberation Sans',sans-serif;font-size:13.1px;font-weight:400;font-style:normal;white-space:pre;">0</div>
<div style="position:absolute;left:502.05px;top:365.00px;line-height:18px;color:#000;font-family:'Liberation Sans',sans-serif;font-size:13.5px;font-weight:400;font-style:normal;white-space:pre;">=</div>
<div style="position:absolute;left:580.15px;top:365.00px;line-height:18px;color:#000;font-family:'Liberation Sans',sans-serif;font-size:13.5px;font-weight:400;font-style:normal;white-space:pre;">+</div>
<div style="position:absolute;left:1000.70px;top:365.00px;line-height:18px;color:#000;font-family:'Liberation Sans',sans-serif;font-size:13.5px;font-weight:400;font-style:normal;white-space:pre;">NA</div>
<div style="position:absolute;left:108.88px;top:385.00px;line-height:18px;color:#000;font-family:'Liberation Sans',sans-serif;font-size:13.8px;font-weight:400;font-style:normal;white-space:pre;">6/1/2019</div>
<div style="position:absolute;left:197.24px;top:385.00px;line-height:17px;color:#000;font-family:'Liberation Sans',sans-serif;font-size:13.1px;font-weight:400;font-style:normal;white-space:pre;">21,200</div>
<div style="position:absolute;left:306.58px;top:385.00px;line-height:17px;color:#000;font-family:'Liberation Sans',sans-serif;font-size:13.1px;font-weight:400;font-style:normal;white-space:pre;">-20,000</div>
<div style="position:absolute;left:460.46px;top:385.00px;line-height:17px;color:#000;font-family:'Liberation Sans',sans-serif;font-size:13.1px;font-weight:400;font-style:normal;white-space:pre;">-1,200</div>
<div style="position:absolute;left:569.00px;top:385.00px;line-height:17px;color:#000;font-family:'Liberation Sans',sans-serif;font-size:13.1px;font-weight:400;font-style:normal;white-space:pre;">0</div>
<div style="position:absolute;left:701.20px;top:385.00px;line-height:17px;color:#000;font-family:'Liberation Sans',sans-serif;font-size:13.1px;font-weight:400;font-style:normal;white-space:pre;">0</div>
<div style="position:absolute;left:769.20px;top:385.00px;line-height:17px;color:#000;font-family:'Liberation Sans',sans-serif;font-size:13.1px;font-weight:400;font-style:normal;white-space:pre;">0</div>
<div style="position:absolute;left:834.50px;top:385.00px;line-height:17px;color:#000;font-family:'Liberation Sans',sans-serif;font-size:13.1px;font-weight:400;font-style:normal;white-space:pre;">0</div>
<div style="position:absolute;left:912.90px;top:385.00px;line-height:17px;color:#000;font-family:'Liberation Sans',sans-serif;font-size:13.1px;font-weight:400;font-style:normal;white-space:pre;">0</div>
<div style="position:absolute;left:957.34px;top:385.00px;line-height:17px;color:#000;font-family:'Liberation Sans',sans-serif;font-size:13.1px;font-weight:400;font-style:normal;white-space:pre;">20,000</div>
<div style="position:absolute;left:502.05px;top:385.00px;line-height:18px;color:#000;font-family:'Liberation Sans',sans-serif;font-size:13.5px;font-weight:400;font-style:normal;white-space:pre;">=</div>
<div style="position:absolute;left:580.15px;top:385.00px;line-height:18px;color:#000;font-family:'Liberation Sans',sans-serif;font-size:13.5px;font-weight:400;font-style:normal;white-space:pre;">+</div>
<div style="position:absolute;left:1000.70px;top:385.00px;line-height:18px;color:#000;font-family:'Liberation Sans',sans-serif;font-size:13.5px;font-weight:400;font-style:normal;white-space:pre;">IA</div>
<div style="position:absolute;left:108.88px;top:405.00px;line-height:18px;color:#000;font-family:'Liberation Sans',sans-serif;font-size:13.8px;font-weight:400;font-style:normal;white-space:pre;">6/1/2019</div>
<div style="position:absolute;left:230.00px;top:405.00px;line-height:17px;color:#000;font-family:'Liberation Sans',sans-serif;font-size:13.1px;font-weight:400;font-style:normal;white-space:pre;">0</div>
<div style="position:absolute;left:343.70px;top:405.00px;line-height:17px;color:#000;font-family:'Liberation Sans',sans-serif;font-size:13.1px;font-weight:400;font-style:normal;white-space:pre;">0</div>
<div style="position:absolute;left:490.30px;top:405.00px;line-height:17px;color:#000;font-family:'Liberation Sans',sans-serif;font-size:13.1px;font-weight:400;font-style:normal;white-space:pre;">0</div>
<div style="position:absolute;left:569.00px;top:405.00px;line-height:17px;color:#000;font-family:'Liberation Sans',sans-serif;font-size:13.1px;font-weight:400;font-style:normal;white-space:pre;">0</div>
<div style="position:absolute;left:701.20px;top:405.00px;line-height:17px;color:#000;font-family:'Liberation Sans',sans-serif;font-size:13.1px;font-weight:400;font-style:normal;white-space:pre;">0</div>
<div style="position:absolute;left:769.20px;top:405.00px;line-height:17px;color:#000;font-family:'Liberation Sans',sans-serif;font-size:13.1px;font-weight:400;font-style:normal;white-space:pre;">0</div>
<div style="position:absolute;left:834.50px;top:405.00px;line-height:17px;color:#000;font-family:'Liberation Sans',sans-serif;font-size:13.1px;font-weight:400;font-style:normal;white-space:pre;">0</div>
<div style="position:absolute;left:912.90px;top:405.00px;line-height:17px;color:#000;font-family:'Liberation Sans',sans-serif;font-size:13.1px;font-weight:400;font-style:normal;white-space:pre;">0</div>
<div style="position:absolute;left:964.62px;top:405.00px;line-height:17px;color:#000;font-family:'Liberation Sans',sans-serif;font-size:13.1px;font-weight:400;font-style:normal;white-space:pre;">1,200</div>
<div style="position:absolute;left:502.05px;top:405.00px;line-height:18px;color:#000;font-family:'Liberation Sans',sans-serif;font-size:13.5px;font-weight:400;font-style:normal;white-space:pre;">=</div>
<div style="position:absolute;left:580.15px;top:405.00px;line-height:18px;color:#000;font-family:'Liberation Sans',sans-serif;font-size:13.5px;font-weight:400;font-style:normal;white-space:pre;">+</div>
<div style="position:absolute;left:1000.70px;top:405.00px;line-height:18px;color:#000;font-family:'Liberation Sans',sans-serif;font-size:13.5px;font-weight:400;font-style:normal;white-space:pre;">OA</div>
<div style="position:absolute;left:91.20px;top:445.00px;line-height:18px;color:#000;font-family:'Liberation Sans',sans-serif;font-size:13.5px;font-weight:700;font-style:normal;white-space:pre;transform:scaleX(1.0209);transform-origin:left top;">Notes</div>
<div style="position:absolute;left:183.38px;top:445.00px;line-height:18px;color:#000;font-family:'Liberation Sans',sans-serif;font-size:13.8px;font-weight:400;font-style:normal;white-space:pre;">06/01/18</div>
<div style="position:absolute;left:168.04px;top:465.00px;line-height:18px;color:#000;font-family:'Liberation Sans',sans-serif;font-size:13.8px;font-weight:400;font-style:normal;white-space:pre;">12/31/2018</div>
<div style="position:absolute;left:183.38px;top:485.00px;line-height:18px;color:#000;font-family:'Liberation Sans',sans-serif;font-size:13.8px;font-weight:400;font-style:normal;white-space:pre;">6/1/2019</div>
<div style="position:absolute;left:183.38px;top:505.00px;line-height:18px;color:#000;font-family:'Liberation Sans',sans-serif;font-size:13.8px;font-weight:400;font-style:normal;white-space:pre;">6/1/2019</div>
<div style="position:absolute;left:241.40px;top:445.00px;line-height:18px;color:#000;font-family:'Liberation Sans',sans-serif;font-size:13.5px;font-weight:400;font-style:italic;white-space:pre;transform:scaleX(1.0285);transform-origin:left top;">Providing loan to small company</div>
<div style="position:absolute;left:241.40px;top:465.00px;line-height:18px;color:#000;font-family:'Liberation Sans',sans-serif;font-size:13.5px;font-weight:400;font-style:normal;white-space:pre;transform:scaleX(1.0267);transform-origin:left top;">Interest accrued during the first seven (7) months, 20,000*6%*(7/12) = $700; Journal entry = Interest receivable (Debit); Interest Revenue (Credit).</div>
<div style="position:absolute;left:241.40px;top:485.00px;line-height:18px;color:#000;font-family:'Liberation Sans',sans-serif;font-size:13.5px;font-weight:400;font-style:normal;white-space:pre;transform:scaleX(1.0366);transform-origin:left top;">After the maturity period of 1 year, the additional interest for the next five (5) months = 20,000*6%*(5/12) = $500 accrued.</div>
<div style="position:absolute;left:241.40px;top:505.00px;line-height:18px;color:#000;font-family:'Liberation Sans',sans-serif;font-size:13.5px;font-weight:400;font-style:normal;white-space:pre;transform:scaleX(1.0031);transform-origin:left top;">Collected the notes receivable including the interest revenue = $20,000 + 500 + 700 = $21,200</div>
<div style="position:absolute;left:241.40px;top:525.00px;line-height:18px;color:#000;font-family:'Liberation Sans',sans-serif;font-size:13.5px;font-weight:400;font-style:normal;white-space:pre;transform:scaleX(1.0247);transform-origin:left top;">IA = Investing activity; OA = Operating Activity; FA = Financing activity</div>
<div style="position:absolute;left:238px;top:541px;width:112px;height:19px;border:2px solid #217346;"></div>
<div style="position:absolute;left:349px;top:559px;width:7px;height:7px;background:#fff;"></div>
<div style="position:absolute;left:350px;top:560px;width:5px;height:5px;background:#217346;"></div>
<div style="position:absolute;left:643.70px;top:8.00px;line-height:16px;color:#fff;font-family:'Liberation Sans',sans-serif;font-size:12.5px;font-weight:400;font-style:normal;white-space:pre;transform:scaleX(0.9111);transform-origin:left top;">Book1  -  Excel</div>
<div style="position:absolute;left:1076.90px;top:8.00px;line-height:16px;color:#fff;font-family:'Liberation Sans',sans-serif;font-size:12.5px;font-weight:400;font-style:normal;white-space:pre;transform:scaleX(0.9724);transform-origin:left top;">Dong, Tian</div>
<div style="position:absolute;left:1146px;top:3px;width:24px;height:24px;border-radius:50%;background:#d6d6d6;"></div>
<div style="position:absolute;left:1149.70px;top:8.00px;line-height:15px;color:#707070;font-family:'Liberation Sans',sans-serif;font-size:11.5px;font-weight:400;font-style:normal;white-space:pre;transform:scaleX(1.0493);transform-origin:left top;">DT</div>
<svg style="position:absolute;left:21px;top:9px;" width="16" height="16" viewBox="0 0 16 16"><path d="M1.3 1.3 H14.7 V14.7 H1.3 Z" fill="none" stroke="#fff" stroke-width="2.4"/><rect x="3" y="8.3" width="10" height="6.5" fill="#fff"/><rect x="5.3" y="11" width="2.6" height="4" fill="#217346"/></svg>
<svg style="position:absolute;left:50px;top:8px;" width="28" height="18" viewBox="0 0 28 18"><path d="M3 6.5 H9.5 C13.5 6.5 15.5 9 15.5 12 C15.5 15 13.5 16.5 10.5 16.5" fill="none" stroke="#fff" stroke-width="2.4"/><path d="M7 2 L2.2 6.5 L7 11" fill="none" stroke="#fff" stroke-width="2.4"/><path d="M20.3 6.5 H25.3 L22.8 10 Z" fill="#fff"/></svg>
<svg style="position:absolute;left:85px;top:8px;" width="28" height="18" viewBox="0 0 28 18"><path d="M15 6 H7 C3 6 1.5 8.5 1.5 11.5 C1.5 14.5 4 16 6 16" fill="none" stroke="#5f9b78" stroke-width="2"/><path d="M11 1.5 L16 6 L11 10.5" fill="none" stroke="#5f9b78" stroke-width="2"/><path d="M20 7 H24.5 L22.25 10 Z" fill="#5f9b78"/></svg>
<svg style="position:absolute;left:122px;top:11px;" width="12" height="10" viewBox="0 0 12 10"><path d="M1.5 1.5 H10.5" stroke="#fff" stroke-width="1.2"/><path d="M2 4.5 L6 8.5 L10 4.5" fill="none" stroke="#fff" stroke-width="1.2"/></svg>
<svg style="position:absolute;left:1197px;top:10px;" width="16" height="12" viewBox="0 0 16 12"><rect x="0.5" y="0.5" width="14" height="10" fill="none" stroke="#fff" stroke-width="1"/><path d="M0.5 3 H14.5" stroke="#fff"/><path d="M7.5 9.5 V4.5 M5 7 L7.5 4.5 L10 7" fill="none" stroke="#fff" stroke-width="1.1"/></svg>
<div style="position:absolute;left:1246px;top:15px;width:10px;height:1px;background:#fff;"></div>
<svg style="position:absolute;left:1291px;top:10px;" width="12" height="12" viewBox="0 0 12 12"><rect x="0.5" y="2.5" width="8" height="8" fill="none" stroke="#fff"/><path d="M2.5 2.5 V0.5 H10.5 V8.5 H8.5" fill="none" stroke="#fff"/></svg>
<svg style="position:absolute;left:1337px;top:10px;" width="12" height="12" viewBox="0 0 12 12"><path d="M0.5 0.5 L11 11 M11 0.5 L0.5 11" stroke="#fff" stroke-width="1.2"/></svg>
<div style="position:absolute;left:61px;top:34px;width:58px;height:30px;background:#f3f3f3;"></div>
<div style="position:absolute;left:19.70px;top:41.00px;line-height:16px;color:#fff;font-family:'Liberation Sans',sans-serif;font-size:12px;font-weight:400;font-style:normal;white-space:pre;transform:scaleX(0.9874);transform-origin:left top;">File</div>
<div style="position:absolute;left:72.70px;top:41.00px;line-height:16px;color:#2f5e43;font-family:'Liberation Sans',sans-serif;font-size:12px;font-weight:400;font-style:normal;white-space:pre;transform:scaleX(1.0651);transform-origin:left top;">Home</div>
<div style="position:absolute;left:132.10px;top:41.00px;line-height:16px;color:#fff;font-family:'Liberation Sans',sans-serif;font-size:12px;font-weight:400;font-style:normal;white-space:pre;transform:scaleX(1.0161);transform-origin:left top;">Insert</div>
<div style="position:absolute;left:188.30px;top:41.00px;line-height:16px;color:#fff;font-family:'Liberation Sans',sans-serif;font-size:12px;font-weight:400;font-style:normal;white-space:pre;transform:scaleX(0.9853);transform-origin:left top;">Page Layout</div>
<div style="position:absolute;left:280.40px;top:41.00px;line-height:16px;color:#fff;font-family:'Liberation Sans',sans-serif;font-size:12px;font-weight:400;font-style:normal;white-space:pre;transform:scaleX(1.0137);transform-origin:left top;">Formulas</div>
<div style="position:absolute;left:356.30px;top:41.00px;line-height:16px;color:#fff;font-family:'Liberation Sans',sans-serif;font-size:12px;font-weight:400;font-style:normal;white-space:pre;">Data</div>
<div style="position:absolute;left:407.40px;top:41.00px;line-height:16px;color:#fff;font-family:'Liberation Sans',sans-serif;font-size:12px;font-weight:400;font-style:normal;white-space:pre;transform:scaleX(0.9680);transform-origin:left top;">Review</div>
<div style="position:absolute;left:470.90px;top:41.00px;line-height:16px;color:#fff;font-family:'Liberation Sans',sans-serif;font-size:12px;font-weight:400;font-style:normal;white-space:pre;transform:scaleX(1.0273);transform-origin:left top;">View</div>
<div style="position:absolute;left:523.10px;top:41.00px;line-height:16px;color:#fff;font-family:'Liberation Sans',sans-serif;font-size:12px;font-weight:400;font-style:normal;white-space:pre;transform:scaleX(1.0734);transform-origin:left top;">Help</div>
<div style="position:absolute;left:603.60px;top:41.00px;line-height:16px;color:#fff;font-family:'Liberation Sans',sans-serif;font-size:12px;font-weight:400;font-style:normal;white-space:pre;transform:scaleX(1.0272);transform-origin:left top;">Tell me what you want to do</div>
<svg style="position:absolute;left:577px;top:40px;" width="16" height="19" viewBox="0 0 16 19"><path d="M8 1.5 C4.2 1.5 2 4.2 2 7.2 C2 9.5 3.3 10.8 4.6 12.2 C5.3 13 5.6 13.6 5.6 14.5 H10.4 C10.4 13.6 10.7 13 11.4 12.2 C12.7 10.8 14 9.5 14 7.2 C14 4.2 11.8 1.5 8 1.5 Z" fill="none" stroke="#fff" stroke-width="1.3"/><path d="M5.8 16.2 H10.2 M6.5 18 H9.5" stroke="#fff" stroke-width="1.2"/></svg>
<svg style="position:absolute;left:1293px;top:41px;" width="17" height="17" viewBox="0 0 17 17"><circle cx="7.5" cy="5" r="4" fill="none" stroke="#fff" stroke-width="1.2"/><path d="M1 16 C1 11.5 3.5 9.5 7.5 9.5 C9 9.5 10 9.8 11 10.3" fill="none" stroke="#fff" stroke-width="1.2"/><path d="M12.5 11 V16.5 M9.75 13.75 H15.25" stroke="#fff" stroke-width="1.2"/></svg>
<div style="position:absolute;left:1312.30px;top:41.00px;line-height:16px;color:#fff;font-family:'Liberation Sans',sans-serif;font-size:12px;font-weight:400;font-style:normal;white-space:pre;transform:scaleX(0.9460);transform-origin:left top;">Share</div>
<div style="position:absolute;left:92px;top:68px;width:1px;height:84px;background:#d0d0d0;"></div>
<div style="position:absolute;left:306px;top:68px;width:1px;height:84px;background:#d0d0d0;"></div>
<div style="position:absolute;left:577px;top:68px;width:1px;height:84px;background:#d0d0d0;"></div>
<div style="position:absolute;left:724px;top:68px;width:1px;height:84px;background:#d0d0d0;"></div>
<div style="position:absolute;left:912px;top:68px;width:1px;height:84px;background:#d0d0d0;"></div>
<div style="position:absolute;left:1055px;top:68px;width:1px;height:84px;background:#d0d0d0;"></div>
<div style="position:absolute;left:1249px;top:68px;width:1px;height:84px;background:#d0d0d0;"></div>
<div style="position:absolute;left:1323px;top:68px;width:1px;height:84px;background:#d0d0d0;"></div>
<div style="position:absolute;left:11.80px;top:140.00px;line-height:16px;color:#262626;font-family:'Liberation Sans',sans-serif;font-size:12px;font-weight:400;font-style:normal;white-space:pre;">Clipboard</div>
<div style="position:absolute;left:178.80px;top:140.00px;line-height:16px;color:#262626;font-family:'Liberation Sans',sans-serif;font-size:12px;font-weight:400;font-style:normal;white-space:pre;transform:scaleX(1.0243);transform-origin:left top;">Font</div>
<div style="position:absolute;left:406.20px;top:140.00px;line-height:16px;color:#262626;font-family:'Liberation Sans',sans-serif;font-size:12px;font-weight:400;font-style:normal;white-space:pre;transform:scaleX(1.0173);transform-origin:left top;">Alignment</div>
<div style="position:absolute;left:621.70px;top:140.00px;line-height:16px;color:#262626;font-family:'Liberation Sans',sans-serif;font-size:12px;font-weight:400;font-style:normal;white-space:pre;transform:scaleX(0.9862);transform-origin:left top;">Number</div>
<div style="position:absolute;left:803.70px;top:140.00px;line-height:16px;color:#262626;font-family:'Liberation Sans',sans-serif;font-size:12px;font-weight:400;font-style:normal;white-space:pre;transform:scaleX(0.9055);transform-origin:left top;">Styles</div>
<div style="position:absolute;left:971.70px;top:140.00px;line-height:16px;color:#262626;font-family:'Liberation Sans',sans-serif;font-size:12px;font-weight:400;font-style:normal;white-space:pre;transform:scaleX(0.9148);transform-origin:left top;">Cells</div>
<div style="position:absolute;left:1133.80px;top:140.00px;line-height:16px;color:#262626;font-family:'Liberation Sans',sans-serif;font-size:12px;font-weight:400;font-style:normal;white-space:pre;transform:scaleX(1.0190);transform-origin:left top;">Editing</div>
<div style="position:absolute;left:1260.80px;top:140.00px;line-height:16px;color:#262626;font-family:'Liberation Sans',sans-serif;font-size:12px;font-weight:400;font-style:normal;white-space:pre;transform:scaleX(0.9624);transform-origin:left top;">Sensitivity</div>
<svg style="position:absolute;left:81px;top:144px;" width="8" height="8" viewBox="0 0 8 8"><path d="M0.5 7.5 V0.5 H7.5" fill="none" stroke="#555" stroke-width="1"/><path d="M2.5 2.5 L7 7 M7 3.5 V7 H3.5" fill="none" stroke="#555" stroke-width="1"/></svg>
<svg style="position:absolute;left:295px;top:144px;" width="8" height="8" viewBox="0 0 8 8"><path d="M0.5 7.5 V0.5 H7.5" fill="none" stroke="#555" stroke-width="1"/><path d="M2.5 2.5 L7 7 M7 3.5 V7 H3.5" fill="none" stroke="#555" stroke-width="1"/></svg>
<svg style="position:absolute;left:566px;top:144px;" width="8" height="8" viewBox="0 0 8 8"><path d="M0.5 7.5 V0.5 H7.5" fill="none" stroke="#555" stroke-width="1"/><path d="M2.5 2.5 L7 7 M7 3.5 V7 H3.5" fill="none" stroke="#555" stroke-width="1"/></svg>
<svg style="position:absolute;left:713px;top:144px;" width="8" height="8" viewBox="0 0 8 8"><path d="M0.5 7.5 V0.5 H7.5" fill="none" stroke="#555" stroke-width="1"/><path d="M2.5 2.5 L7 7 M7 3.5 V7 H3.5" fill="none" stroke="#555" stroke-width="1"/></svg>
<svg style="position:absolute;left:1347px;top:146px;" width="12" height="7" viewBox="0 0 12 7"><path d="M1 6 L6 1 L11 6" fill="none" stroke="#444" stroke-width="1.2"/></svg>
<svg style="position:absolute;left:16px;top:71px;" width="31" height="32" viewBox="0 0 31 32"><rect x="1" y="4" width="21" height="26" fill="#dadada"/><path d="M6 2.5 H17 V7 H6 Z" fill="#bdbdbd"/><circle cx="11.5" cy="2.5" r="2.2" fill="#bdbdbd"/><path d="M15.5 12.5 H25 L29.5 17 V31 H15.5 Z" fill="#fbfbfb" stroke="#b3b3b3" stroke-width="1"/><path d="M25 12.5 V17 H29.5" fill="none" stroke="#b3b3b3"/></svg>
<div style="position:absolute;left:14.80px;top:105.00px;line-height:16px;color:#a6a6a6;font-family:'Liberation Sans',sans-serif;font-size:12px;font-weight:400;font-style:normal;white-space:pre;transform:scaleX(0.9450);transform-origin:left top;">Paste</div>
<svg style="position:absolute;left:26px;top:127px;" width="5" height="3" viewBox="0 0 5 3"><path d="M0 0 H5 L2.5 3 Z" fill="#b0b0b0"/></svg>
<svg style="position:absolute;left:53px;top:69px;" width="17" height="17" viewBox="0 0 17 17"><path d="M3.5 0.5 L10.5 10 M13 0.5 L6 10" stroke="#555" stroke-width="1.6"/><circle cx="4.8" cy="12.2" r="2.9" fill="#e3ecf7" stroke="#5f88b8" stroke-width="1.2"/><circle cx="11.8" cy="12.2" r="2.9" fill="#e3ecf7" stroke="#5f88b8" stroke-width="1.2"/></svg>
<svg style="position:absolute;left:52px;top:93px;" width="17" height="16" viewBox="0 0 17 16"><path d="M1.5 1.5 H6.5 L8.5 3.5 V11.5 H1.5 Z" fill="#fff" stroke="#444" stroke-width="1"/><path d="M3 5 H5.5 M3 7 H6.5 M3 9 H5.5" stroke="#555" stroke-width="0.8"/><path d="M6.5 5.5 H11.5 L14.5 8.5 V15.5 H6.5 Z" fill="#fff" stroke="#444" stroke-width="1"/><path d="M8.2 9.5 H11 M8.2 11.5 H13 M8.2 13.5 H13" stroke="#4a7fba" stroke-width="0.8"/></svg>
<svg style="position:absolute;left:75px;top:100px;" width="5" height="3" viewBox="0 0 5 3"><path d="M0 0 H5 L2.5 3 Z" fill="#606060"/></svg>
<svg style="position:absolute;left:53px;top:115px;" width="18" height="17" viewBox="0 0 18 17"><path d="M9 6 L13 2 L16.5 5.5 L12.5 9.5 Z" fill="#555"/><path d="M2 12 L8 6.5 L12 10.5 L6.5 16 Z" fill="#e0b75e"/><path d="M7.5 7 L11.5 11" stroke="#444" stroke-width="1.6"/></svg>
<div style="position:absolute;left:101px;top:75px;width:101px;height:21px;background:#fff;border:1px solid #c6c6c6;"></div>
<div style="position:absolute;left:203px;top:75px;width:50px;height:21px;background:#fff;border:1px solid #c6c6c6;"></div>
<div style="position:absolute;left:104.00px;top:79.00px;line-height:16px;color:#333;font-family:'Liberation Sans',sans-serif;font-size:12px;font-weight:400;font-style:normal;white-space:pre;transform:scaleX(1.0084);transform-origin:left top;">Calibri</div>
<div style="position:absolute;left:207.00px;top:79.00px;line-height:16px;color:#333;font-family:'Liberation Sans',sans-serif;font-size:12px;font-weight:400;font-style:normal;white-space:pre;transform:scaleX(0.8261);transform-origin:left top;">11</div>
<svg style="position:absolute;left:187px;top:83px;" width="14" height="8" viewBox="0 0 14 8"><path d="M0.7 0.7 L7 7 L13.3 0.7" fill="none" stroke="#444" stroke-width="1.2"/></svg>
<svg style="position:absolute;left:238px;top:83px;" width="14" height="8" viewBox="0 0 14 8"><path d="M0.7 0.7 L7 7 L13.3 0.7" fill="none" stroke="#444" stroke-width="1.2"/></svg>
<svg style="position:absolute;left:260px;top:78px;" width="16" height="16" viewBox="0 0 16 16"><path d="M1.5 14.5 L6 2.5 H7.5 L12 14.5 M3.5 10 H10" fill="none" stroke="#555" stroke-width="1.9"/><path d="M11.5 4 L13.75 1 L16 4 Z" fill="#4a7fba"/></svg>
<svg style="position:absolute;left:283px;top:78px;" width="16" height="16" viewBox="0 0 16 16"><path d="M1.5 14.5 L5.2 5.2 H6.6 L10.3 14.5 M3.2 11 H8.6" fill="none" stroke="#555" stroke-width="1.7"/><path d="M10 1.5 H15 L12.5 4.5 Z" fill="#4a7fba"/></svg>
<div style="position:absolute;left:107.00px;top:108.00px;line-height:17px;color:#444;font-family:'Liberation Sans',sans-serif;font-size:13px;font-weight:700;font-style:normal;white-space:pre;transform:scaleX(0.9584);transform-origin:left top;">B</div>
<div style="position:absolute;left:130.00px;top:108.00px;line-height:17px;color:#444;font-family:'Liberation Sans',sans-serif;font-size:13px;font-weight:400;font-style:italic;white-space:pre;transform:scaleX(1.9310);transform-origin:left top;font-family:Liberation Serif,serif;">I</div>
<div style="position:absolute;left:150.60px;top:108.00px;line-height:17px;color:#444;font-family:'Liberation Sans',sans-serif;font-size:13px;font-weight:700;font-style:normal;white-space:pre;transform:scaleX(1.0223);transform-origin:left top;">U</div>
<div style="position:absolute;left:151px;top:122px;width:9px;height:1px;background:#444;"></div>
<svg style="position:absolute;left:170px;top:116px;" width="5" height="3" viewBox="0 0 5 3"><path d="M0 0 H5 L2.5 3 Z" fill="#606060"/></svg>
<div style="position:absolute;left:183px;top:107px;width:1px;height:21px;background:#d0d0d0;"></div>
<div style="position:absolute;left:226px;top:107px;width:1px;height:21px;background:#d0d0d0;"></div>
<svg style="position:absolute;left:191px;top:109px;" width="16" height="15" viewBox="0 0 16 15"><path d="M1.5 0.5 V13 M14.5 0.5 V13 M8 0.5 V13 M1 1.5 H15 M1 7.5 H15" fill="none" stroke="#555" stroke-width="1" stroke-dasharray="1 1"/><path d="M1 13.5 H15" stroke="#555" stroke-width="1.3"/></svg>
<svg style="position:absolute;left:213px;top:116px;" width="5" height="3" viewBox="0 0 5 3"><path d="M0 0 H5 L2.5 3 Z" fill="#606060"/></svg>
<svg style="position:absolute;left:231px;top:107px;" width="21" height="20" viewBox="0 0 21 20"><path d="M3.5 8.5 L9 3 L15 9 L9.5 14.5 Z" fill="#fff" stroke="#555" stroke-width="1.1"/><path d="M8 0.5 V7" stroke="#555" stroke-width="1.1"/><path d="M15.5 7 C18 8 19.5 10 19 11.5 C18.5 13 16.5 12.5 16 10 Z" fill="#3f7fbf"/><rect x="1" y="14" width="18" height="4" fill="#fff200"/></svg>
<svg style="position:absolute;left:256px;top:116px;" width="5" height="3" viewBox="0 0 5 3"><path d="M0 0 H5 L2.5 3 Z" fill="#606060"/></svg>
<svg style="position:absolute;left:267px;top:107px;" width="18" height="20" viewBox="0 0 18 20"><path d="M4 13.5 L8.3 3 H9.7 L14 13.5 M5.8 10 H12.2" fill="none" stroke="#555" stroke-width="1.7"/><rect x="1" y="14" width="16" height="4" fill="#e00000"/></svg>
<svg style="position:absolute;left:290px;top:116px;" width="5" height="3" viewBox="0 0 5 3"><path d="M0 0 H5 L2.5 3 Z" fill="#606060"/></svg>
<svg style="position:absolute;left:319px;top:77px;" width="16" height="16" viewBox="0 0 16 16"><rect x="0" y="1" width="14" height="1.3" fill="#6a6a6a"/><rect x="0" y="4" width="14" height="1.3" fill="#6a6a6a"/><rect x="0" y="7" width="14" height="1.3" fill="#6a6a6a"/></svg>
<svg style="position:absolute;left:341px;top:81px;" width="16" height="16" viewBox="0 0 16 16"><rect x="0" y="1" width="14" height="1.3" fill="#6a6a6a"/><rect x="0" y="4" width="14" height="1.3" fill="#6a6a6a"/><rect x="0" y="7" width="14" height="1.3" fill="#6a6a6a"/></svg>
<div style="position:absolute;left:359px;top:75px;width:22px;height:22px;background:#c5c5c5;"></div>
<svg style="position:absolute;left:363px;top:84px;" width="16" height="16" viewBox="0 0 16 16"><rect x="0" y="2" width="14" height="1.3" fill="#555"/><rect x="0" y="5" width="14" height="1.3" fill="#555"/><rect x="0" y="8" width="14" height="1.3" fill="#555"/></svg>
<div style="position:absolute;left:385px;top:76px;width:1px;height:20px;background:#d0d0d0;"></div>
<svg style="position:absolute;left:391px;top:76px;" width="28" height="19" viewBox="0 0 28 19"><text x="0" y="0" font-family="Liberation Sans" font-size="11" fill="#555" transform="translate(4.5 15.5) rotate(-45)">ab</text><path d="M8.5 16.5 L17 8" fill="none" stroke="#555" stroke-width="1.1"/><path d="M18.5 6.5 L14.5 7.5 L17.5 10.5 Z" fill="#555"/><path d="M22 9.5 H27 L24.5 12.5 Z" fill="#606060"/></svg>
<svg style="position:absolute;left:319px;top:110px;" width="16" height="16" viewBox="0 0 16 16"><rect x="0" y="1" width="14" height="1.3" fill="#6a6a6a"/><rect x="0" y="4" width="10" height="1.3" fill="#6a6a6a"/><rect x="0" y="7" width="14" height="1.3" fill="#6a6a6a"/><rect x="0" y="10" width="10" height="1.3" fill="#6a6a6a"/></svg>
<svg style="position:absolute;left:341px;top:110px;" width="16" height="16" viewBox="0 0 16 16"><rect x="0" y="1" width="14" height="1.3" fill="#6a6a6a"/><rect x="2" y="4" width="10" height="1.3" fill="#6a6a6a"/><rect x="0" y="7" width="14" height="1.3" fill="#6a6a6a"/><rect x="2" y="10" width="10" height="1.3" fill="#6a6a6a"/></svg>
<svg style="position:absolute;left:363px;top:110px;" width="16" height="16" viewBox="0 0 16 16"><rect x="0" y="1" width="14" height="1.3" fill="#6a6a6a"/><rect x="4" y="4" width="10" height="1.3" fill="#6a6a6a"/><rect x="0" y="7" width="14" height="1.3" fill="#6a6a6a"/><rect x="4" y="10" width="10" height="1.3" fill="#6a6a6a"/></svg>
<div style="position:absolute;left:385px;top:107px;width:1px;height:21px;background:#d0d0d0;"></div>
<svg style="position:absolute;left:393px;top:109px;" width="17" height="15" viewBox="0 0 17 15"><path d="M6 1.5 H16 M9 5.5 H16 M9 9 H16 M1 13 H16" stroke="#6a6a6a" stroke-width="1.3"/><path d="M7 7 H1.5 M4 4.5 L1.5 7 L4 9.5" fill="none" stroke="#4a7fba" stroke-width="1.5"/></svg>
<svg style="position:absolute;left:414px;top:109px;" width="17" height="15" viewBox="0 0 17 15"><path d="M6 1.5 H16 M9 5.5 H16 M9 9 H16 M1 13 H16" stroke="#6a6a6a" stroke-width="1.3"/><path d="M1 7 H6.5 M4 4.5 L6.5 7 L4 9.5" fill="none" stroke="#4a7fba" stroke-width="1.5"/></svg>
<div style="position:absolute;left:438px;top:73px;width:1px;height:55px;background:#d0d0d0;"></div>
<svg style="position:absolute;left:447px;top:77px;" width="15" height="17" viewBox="0 0 15 17"><text x="0.5" y="8.6" font-family="Liberation Sans" font-size="10.5" fill="#4a4a4a">ab</text><text x="0.5" y="15.6" font-family="Liberation Sans" font-size="10.5" fill="#4a4a4a">c</text><path d="M12.5 10.5 V13 H8.5 M10 11.5 L8.5 13 L10 14.5" fill="none" stroke="#4a7fba" stroke-width="1"/></svg>
<div style="position:absolute;left:464.60px;top:79.00px;line-height:16px;color:#262626;font-family:'Liberation Sans',sans-serif;font-size:12px;font-weight:400;font-style:normal;white-space:pre;transform:scaleX(0.9873);transform-origin:left top;">Wrap Text</div>
<svg style="position:absolute;left:445px;top:108px;" width="17" height="17" viewBox="0 0 17 17"><rect x="1.5" y="1.5" width="14" height="14" fill="#fff" stroke="#666" stroke-width="1"/><path d="M1.5 5 H15.5 M1.5 12 H15.5 M8.5 1.5 V5 M8.5 12 V15.5" stroke="#666" stroke-width="1"/><path d="M3.5 8.5 H13.5 M5 7 L3.5 8.5 L5 10 M12 7 L13.5 8.5 L12 10" fill="none" stroke="#4a7fba" stroke-width="1"/></svg>
<div style="position:absolute;left:464.60px;top:110.00px;line-height:16px;color:#262626;font-family:'Liberation Sans',sans-serif;font-size:12px;font-weight:400;font-style:normal;white-space:pre;transform:scaleX(1.0165);transform-origin:left top;">Merge &amp; Center</div>
<svg style="position:absolute;left:560px;top:116px;" width="5" height="3" viewBox="0 0 5 3"><path d="M0 0 H5 L2.5 3 Z" fill="#606060"/></svg>
<div style="position:absolute;left:586px;top:75px;width:129px;height:21px;background:#fff;border:1px solid #c6c6c6;"></div>
<div style="position:absolute;left:589.00px;top:79.00px;line-height:16px;color:#333;font-family:'Liberation Sans',sans-serif;font-size:12px;font-weight:400;font-style:normal;white-space:pre;transform:scaleX(0.9203);transform-origin:left top;">General</div>
<svg style="position:absolute;left:700px;top:83px;" width="14" height="8" viewBox="0 0 14 8"><path d="M0.7 0.7 L7 7 L13.3 0.7" fill="none" stroke="#444" stroke-width="1.2"/></svg>
<div style="position:absolute;left:592.77px;top:107.00px;line-height:22px;color:#555;font-family:'Liberation Sans',sans-serif;font-size:17px;font-weight:400;font-style:normal;white-space:pre;">$</div>
<svg style="position:absolute;left:611px;top:116px;" width="5" height="3" viewBox="0 0 5 3"><path d="M0 0 H5 L2.5 3 Z" fill="#606060"/></svg>
<div style="position:absolute;left:624.83px;top:108.00px;line-height:20px;color:#555;font-family:'Liberation Sans',sans-serif;font-size:15px;font-weight:400;font-style:normal;white-space:pre;">%</div>
<div style="position:absolute;left:650.63px;top:102.00px;line-height:22px;color:#555;font-family:'Liberation Sans',sans-serif;font-size:17px;font-weight:700;font-style:normal;white-space:pre;">,</div>
<div style="position:absolute;left:668px;top:107px;width:1px;height:20px;background:#d0d0d0;"></div>
<svg style="position:absolute;left:675px;top:109px;" width="17" height="15" viewBox="0 0 17 15"><text x="6" y="6.5" font-family="Liberation Sans" font-size="8" fill="#444">.0</text><text x="2" y="14" font-family="Liberation Sans" font-size="8" fill="#444">.00</text><path d="M5.5 3.5 H1 M3 1.5 L1 3.5 L3 5.5" fill="none" stroke="#4a7fba" stroke-width="1.1"/></svg>
<svg style="position:absolute;left:697px;top:109px;" width="17" height="15" viewBox="0 0 17 15"><text x="2" y="6.5" font-family="Liberation Sans" font-size="8" fill="#444">.00</text><text x="6" y="14" font-family="Liberation Sans" font-size="8" fill="#444">.0</text><path d="M0 11 H5 M3 9 L5 11 L3 13" fill="none" stroke="#4a7fba" stroke-width="1.1"/></svg>
<svg style="position:absolute;left:754px;top:71px;" width="32" height="32" viewBox="0 0 32 32">
<rect x="1.5" y="1.5" width="24" height="24" fill="#fff" stroke="#777" stroke-width="1"/>
<path d="M1.5 7.5 H25.5 M1.5 13.5 H25.5 M1.5 19.5 H25.5 M7.5 1.5 V25.5 M19.5 1.5 V25.5" stroke="#999" stroke-width="1"/>
<rect x="7.5" y="1.5" width="6" height="6" fill="#d9534f"/><rect x="7.5" y="7.5" width="12" height="6" fill="#3f7fbf"/><rect x="7.5" y="13.5" width="9" height="6" fill="#d9534f"/><rect x="7.5" y="19.5" width="4" height="6" fill="#3f7fbf"/>
<rect x="13.5" y="17.5" width="16" height="13" fill="#fff" stroke="#666" stroke-width="1"/>
<text x="17" y="28" font-family="Liberation Sans" font-size="11" fill="#444">≠</text></svg>
<div style="position:absolute;left:737.80px;top:105.00px;line-height:16px;color:#262626;font-family:'Liberation Sans',sans-serif;font-size:12px;font-weight:400;font-style:normal;white-space:pre;transform:scaleX(1.0359);transform-origin:left top;">Conditional</div>
<div style="position:absolute;left:734.70px;top:121.00px;line-height:16px;color:#262626;font-family:'Liberation Sans',sans-serif;font-size:12px;font-weight:400;font-style:normal;white-space:pre;transform:scaleX(1.0338);transform-origin:left top;">Formatting</div>
<svg style="position:absolute;left:797px;top:127px;" width="5" height="3" viewBox="0 0 5 3"><path d="M0 0 H5 L2.5 3 Z" fill="#707070"/></svg>
<svg style="position:absolute;left:819px;top:72px;" width="32" height="31" viewBox="0 0 32 31">
<rect x="1.5" y="1.5" width="21" height="20" fill="#fff" stroke="#777" stroke-width="1"/>
<rect x="6.5" y="6.5" width="16" height="15" fill="#c2d3e6"/>
<path d="M1.5 6.5 H22.5 M1.5 11.5 H22.5 M1.5 16.5 H22.5 M6.5 1.5 V21.5 M11.5 1.5 V21.5 M16.5 1.5 V21.5" stroke="#999" stroke-width="1"/>
<path d="M21 13 L29 5 V11 L23 17 Z" fill="#707070"/>
<path d="M10 29 C12 22 15 19 19 18 L22 21 C21 26 16 29 10 29 Z" fill="#3f7fbf"/></svg>
<div style="position:absolute;left:806.70px;top:105.00px;line-height:16px;color:#262626;font-family:'Liberation Sans',sans-serif;font-size:12px;font-weight:400;font-style:normal;white-space:pre;transform:scaleX(0.9812);transform-origin:left top;">Format as</div>
<div style="position:absolute;left:814.80px;top:121.00px;line-height:16px;color:#262626;font-family:'Liberation Sans',sans-serif;font-size:12px;font-weight:400;font-style:normal;white-space:pre;transform:scaleX(1.0109);transform-origin:left top;">Table</div>
<svg style="position:absolute;left:846px;top:127px;" width="5" height="3" viewBox="0 0 5 3"><path d="M0 0 H5 L2.5 3 Z" fill="#707070"/></svg>
<svg style="position:absolute;left:869px;top:72px;" width="32" height="31" viewBox="0 0 32 31">
<rect x="1.5" y="1.5" width="24" height="20" fill="#fff" stroke="#777" stroke-width="1"/>
<path d="M1.5 6.5 H25.5 M1.5 16.5 H25.5 M6.5 1.5 V21.5 M20.5 1.5 V21.5" stroke="#999" stroke-width="1"/>
<rect x="7" y="7" width="13" height="9" fill="#b8cce4"/>
<path d="M22 13 L30 5 V11 L24 17 Z" fill="#707070"/>
<path d="M11 29 C13 22 16 19 20 18 L23 21 C22 26 17 29 11 29 Z" fill="#3f7fbf"/></svg>
<div style="position:absolute;left:872.60px;top:105.00px;line-height:16px;color:#262626;font-family:'Liberation Sans',sans-serif;font-size:12px;font-weight:400;font-style:normal;white-space:pre;transform:scaleX(1.0110);transform-origin:left top;">Cell</div>
<div style="position:absolute;left:863.30px;top:121.00px;line-height:16px;color:#262626;font-family:'Liberation Sans',sans-serif;font-size:12px;font-weight:400;font-style:normal;white-space:pre;transform:scaleX(0.9637);transform-origin:left top;">Styles</div>
<svg style="position:absolute;left:897px;top:127px;" width="5" height="3" viewBox="0 0 5 3"><path d="M0 0 H5 L2.5 3 Z" fill="#707070"/></svg>
<svg style="position:absolute;left:928px;top:71px;" width="28" height="29" viewBox="0 0 28 29">
<rect x="1.5" y="1.5" width="14" height="6" fill="#fff" stroke="#666"/><path d="M8.5 1.5 V7.5" stroke="#666"/>
<rect x="12.5" y="10.5" width="14" height="6" fill="#c6d6e8" stroke="#666"/><path d="M19.5 10.5 V16.5" stroke="#666"/>
<path d="M9 13.5 H2.5 M5 11 L2.5 13.5 L5 16" fill="none" stroke="#3f7fbf" stroke-width="1.6"/>
<rect x="1.5" y="19.5" width="14" height="8" fill="#fff" stroke="#666"/><path d="M8.5 19.5 V27.5 M1.5 23.5 H15.5" stroke="#666"/></svg>
<div style="position:absolute;left:926.70px;top:105.00px;line-height:16px;color:#262626;font-family:'Liberation Sans',sans-serif;font-size:12px;font-weight:400;font-style:normal;white-space:pre;transform:scaleX(0.9895);transform-origin:left top;">Insert</div>
<svg style="position:absolute;left:939px;top:127px;" width="5" height="3" viewBox="0 0 5 3"><path d="M0 0 H5 L2.5 3 Z" fill="#707070"/></svg>
<svg style="position:absolute;left:969px;top:71px;" width="32" height="30" viewBox="0 0 32 30">
<rect x="1.5" y="1.5" width="14" height="6" fill="#fff" stroke="#666"/><path d="M8.5 1.5 V7.5" stroke="#666"/>
<rect x="7.5" y="10.5" width="9" height="6" fill="#cfc6dc" stroke="#666"/>
<rect x="1.5" y="19.5" width="14" height="9" fill="#fff" stroke="#666"/><path d="M8.5 19.5 V28.5 M1.5 24 H15.5" stroke="#666"/>
<path d="M16 7 L29 20 M29 7 L16 20" stroke="#d9534f" stroke-width="2.2"/></svg>
<div style="position:absolute;left:966.70px;top:105.00px;line-height:16px;color:#262626;font-family:'Liberation Sans',sans-serif;font-size:12px;font-weight:400;font-style:normal;white-space:pre;transform:scaleX(0.9831);transform-origin:left top;">Delete</div>
<svg style="position:absolute;left:981px;top:127px;" width="5" height="3" viewBox="0 0 5 3"><path d="M0 0 H5 L2.5 3 Z" fill="#707070"/></svg>
<svg style="position:absolute;left:1011px;top:70px;" width="30" height="32" viewBox="0 0 30 32">
<path d="M2 1 V6 M28 1 V6 M2 3.5 H28 M5 1.5 L2 3.5 L5 5.5 M25 1.5 L28 3.5 L25 5.5" fill="none" stroke="#3f6fa6" stroke-width="1.1"/>
<rect x="1.5" y="9.5" width="27" height="18" fill="#fff" stroke="#666"/>
<path d="M1.5 14.5 H28.5 M1.5 22.5 H28.5 M8.5 9.5 V27.5 M16.5 9.5 V27.5 M23.5 9.5 V27.5" stroke="#999"/>
<rect x="8.5" y="14.5" width="8" height="8" fill="#3f7fbf"/>
<path d="M1.5 27.5 V31 H9 L11 29 L13 31 H18 L20 28" fill="none" stroke="#666"/></svg>
<div style="position:absolute;left:1006.70px;top:105.00px;line-height:16px;color:#262626;font-family:'Liberation Sans',sans-serif;font-size:12px;font-weight:400;font-style:normal;white-space:pre;transform:scaleX(1.0285);transform-origin:left top;">Format</div>
<svg style="position:absolute;left:1023px;top:127px;" width="5" height="3" viewBox="0 0 5 3"><path d="M0 0 H5 L2.5 3 Z" fill="#707070"/></svg>
<svg style="position:absolute;left:1066px;top:69px;" width="17" height="17" viewBox="0 0 17 17"><path d="M15.5 3.5 V1.5 H1.5 L8 8.5 L1.5 15.5 H15.5 V13.5" fill="none" stroke="#444" stroke-width="2"/></svg>
<div style="position:absolute;left:1085.50px;top:71.00px;line-height:16px;color:#262626;font-family:'Liberation Sans',sans-serif;font-size:12px;font-weight:400;font-style:normal;white-space:pre;transform:scaleX(1.0272);transform-origin:left top;">AutoSum</div>
<svg style="position:absolute;left:1146px;top:77px;" width="5" height="3" viewBox="0 0 5 3"><path d="M0 0 H5 L2.5 3 Z" fill="#606060"/></svg>
<svg style="position:absolute;left:1067px;top:93px;" width="16" height="17" viewBox="0 0 16 17"><rect x="0.5" y="0.5" width="14" height="15" fill="#fff" stroke="#777"/><rect x="0.5" y="0.5" width="14" height="2" fill="#777"/><path d="M7.5 4.5 V12 M4.5 9 L7.5 12 L10.5 9" fill="none" stroke="#3f6fa6" stroke-width="1.6"/></svg>
<div style="position:absolute;left:1085.50px;top:94.00px;line-height:16px;color:#262626;font-family:'Liberation Sans',sans-serif;font-size:12px;font-weight:400;font-style:normal;white-space:pre;transform:scaleX(1.0634);transform-origin:left top;">Fill</div>
<svg style="position:absolute;left:1104px;top:100px;" width="5" height="3" viewBox="0 0 5 3"><path d="M0 0 H5 L2.5 3 Z" fill="#606060"/></svg>
<svg style="position:absolute;left:1067px;top:116px;" width="15" height="14" viewBox="0 0 15 14"><path d="M1 9.5 L8.5 2 L13.5 6.5 L6 14 Z" fill="#e06a8a"/><path d="M1 9.5 L4 12.5" stroke="#f3c0cf" stroke-width="2"/></svg>
<div style="position:absolute;left:1085.50px;top:117.00px;line-height:16px;color:#262626;font-family:'Liberation Sans',sans-serif;font-size:12px;font-weight:400;font-style:normal;white-space:pre;transform:scaleX(0.9865);transform-origin:left top;">Clear</div>
<svg style="position:absolute;left:1116px;top:123px;" width="5" height="3" viewBox="0 0 5 3"><path d="M0 0 H5 L2.5 3 Z" fill="#606060"/></svg>
<svg style="position:absolute;left:1161px;top:72px;" width="32" height="28" viewBox="0 0 32 28">
<text x="0" y="12" font-family="Liberation Sans" font-weight="bold" font-size="15" fill="#3f7fbf">A</text>
<text x="0.5" y="27" font-family="Liberation Sans" font-weight="bold" font-size="15" fill="#a25fc3">Z</text>
<path d="M12 7 H30 L23.5 14 V24 L19.5 22 V14 Z" fill="#707070"/></svg>
<div style="position:absolute;left:1159.30px;top:105.00px;line-height:16px;color:#262626;font-family:'Liberation Sans',sans-serif;font-size:12px;font-weight:400;font-style:normal;white-space:pre;transform:scaleX(1.0492);transform-origin:left top;">Sort &amp;</div>
<div style="position:absolute;left:1159.70px;top:121.00px;line-height:16px;color:#262626;font-family:'Liberation Sans',sans-serif;font-size:12px;font-weight:400;font-style:normal;white-space:pre;transform:scaleX(1.0161);transform-origin:left top;">Filter</div>
<svg style="position:absolute;left:1189px;top:127px;" width="5" height="3" viewBox="0 0 5 3"><path d="M0 0 H5 L2.5 3 Z" fill="#707070"/></svg>
<svg style="position:absolute;left:1205px;top:71px;" width="30" height="30" viewBox="0 0 30 30"><circle cx="17.5" cy="11.5" r="8.5" fill="#fff" stroke="#3f6fa6" stroke-width="2.4"/><path d="M11.5 17.5 L2.5 26.5" stroke="#3f7fbf" stroke-width="3.2" stroke-linecap="round"/></svg>
<div style="position:absolute;left:1201.50px;top:105.00px;line-height:16px;color:#262626;font-family:'Liberation Sans',sans-serif;font-size:12px;font-weight:400;font-style:normal;white-space:pre;transform:scaleX(1.0695);transform-origin:left top;">Find &amp;</div>
<div style="position:absolute;left:1199.20px;top:121.00px;line-height:16px;color:#262626;font-family:'Liberation Sans',sans-serif;font-size:12px;font-weight:400;font-style:normal;white-space:pre;transform:scaleX(1.0072);transform-origin:left top;">Select</div>
<svg style="position:absolute;left:1234px;top:127px;" width="5" height="3" viewBox="0 0 5 3"><path d="M0 0 H5 L2.5 3 Z" fill="#707070"/></svg>
<div style="position:absolute;left:1281px;top:80px;width:10px;height:10px;border-radius:50%;background:#c8c8c8;"></div>
<div style="position:absolute;left:1302px;top:72px;width:1px;height:8px;background:#dcdcdc;"></div>
<div style="position:absolute;left:1290px;top:101px;width:6px;height:1px;background:#dcdcdc;"></div>
<div style="position:absolute;left:1259.60px;top:105.00px;line-height:16px;color:#b0b0b0;font-family:'Liberation Sans',sans-serif;font-size:12px;font-weight:400;font-style:normal;white-space:pre;transform:scaleX(0.9939);transform-origin:left top;">Sensitivity</div>
<svg style="position:absolute;left:1283px;top:127px;" width="5" height="3" viewBox="0 0 5 3"><path d="M0 0 H5 L2.5 3 Z" fill="#c0c0c0"/></svg>
<div style="position:absolute;left:6px;top:167px;width:99px;height:24px;background:#fff;border:1px solid #c6c6c6;"></div>
<div style="position:absolute;left:11.80px;top:173.00px;line-height:16px;color:#333;font-family:'Liberation Sans',sans-serif;font-size:12.5px;font-weight:400;font-style:normal;white-space:pre;transform:scaleX(1.0507);transform-origin:left top;">D17</div>
<svg style="position:absolute;left:93px;top:177px;" width="8" height="4" viewBox="0 0 8 4"><path d="M0 0 H7.5 L3.75 4 Z" fill="#606060"/></svg>
<div style="position:absolute;left:121px;top:175px;width:2px;height:2px;background:#a0a0a0;"></div>
<div style="position:absolute;left:121px;top:179px;width:2px;height:2px;background:#a0a0a0;"></div>
<div style="position:absolute;left:121px;top:183px;width:2px;height:2px;background:#a0a0a0;"></div>
<div style="position:absolute;left:137px;top:167px;width:108px;height:24px;background:#fff;border:1px solid #c6c6c6;"></div>
<svg style="position:absolute;left:150px;top:175px;" width="12" height="11" viewBox="0 0 12 11"><path d="M1 0.5 L11 10.5 M11 0.5 L1 10.5" stroke="#c2c2c2" stroke-width="1.3"/></svg>
<svg style="position:absolute;left:185px;top:175px;" width="14" height="11" viewBox="0 0 14 11"><path d="M1 5.5 L5 9.5 L13 1" fill="none" stroke="#c8c8c8" stroke-width="2"/></svg>
<div style="position:absolute;left:222.50px;top:172.00px;line-height:17px;color:#555;font-family:'Liberation Sans',sans-serif;font-size:13px;font-weight:700;font-style:italic;white-space:pre;font-family:'Liberation Serif',serif;">f</div>
<div style="position:absolute;left:227.50px;top:174.00px;line-height:14px;color:#555;font-family:'Liberation Sans',sans-serif;font-size:11px;font-weight:700;font-style:italic;white-space:pre;font-family:'Liberation Serif',serif;">x</div>
<div style="position:absolute;left:250px;top:167px;width:1109px;height:24px;background:#fff;border:1px solid #c6c6c6;"></div>
<svg style="position:absolute;left:1348px;top:176px;" width="10" height="6" viewBox="0 0 10 6"><path d="M1 1 L5 5 L9 1" fill="none" stroke="#555" stroke-width="1.6"/></svg>
<div style="position:absolute;left:1345px;top:200px;width:21px;height:478px;background:#e6e6e6;"></div>
<div style="position:absolute;left:1348px;top:205px;width:13px;height:14px;background:#fff;border:1px solid #ababab;"></div>
<svg style="position:absolute;left:1351px;top:209px;" width="9" height="5" viewBox="0 0 9 5"><path d="M0 5 L4.5 0 L9 5 Z" fill="#606060"/></svg>
<div style="position:absolute;left:1348px;top:220px;width:13px;height:421px;background:#fff;border:1px solid #ababab;"></div>
<div style="position:absolute;left:1349px;top:642px;width:13px;height:22px;background:#dadada;"></div>
<div style="position:absolute;left:1348px;top:664px;width:13px;height:13px;background:#fff;border:1px solid #ababab;"></div>
<svg style="position:absolute;left:1351px;top:669px;" width="9" height="5" viewBox="0 0 9 5"><path d="M0 0 L4.5 5 L9 0 Z" fill="#606060"/></svg>
<div style="position:absolute;left:0px;top:679px;width:1366px;height:27px;background:#e6e6e6;"></div>
<div style="position:absolute;left:0px;top:706px;width:1366px;height:1px;background:#d6d6d6;"></div>
<svg style="position:absolute;left:27px;top:688px;" width="6" height="9" viewBox="0 0 6 9"><path d="M5 0 L0 4.5 L5 9 Z" fill="#c0c0c0"/></svg>
<svg style="position:absolute;left:55px;top:688px;" width="6" height="9" viewBox="0 0 6 9"><path d="M0 0 L5 4.5 L0 9 Z" fill="#c0c0c0"/></svg>
<div style="position:absolute;left:100px;top:678px;width:63px;height:22px;background:#fff;border-left:1px solid #ababab;border-right:1px solid #ababab;border-bottom:2px solid #217346;height:23px;"></div>
<div style="position:absolute;left:112.50px;top:684.00px;line-height:17px;color:#217346;font-family:'Liberation Sans',sans-serif;font-size:13px;font-weight:700;font-style:normal;white-space:pre;transform:scaleX(0.9146);transform-origin:left top;">Sheet1</div>
<svg style="position:absolute;left:198px;top:684px;" width="16" height="16" viewBox="0 0 16 16"><circle cx="8" cy="8" r="7" fill="none" stroke="#777" stroke-width="1.2"/><path d="M8 4 V12 M4 8 H12" stroke="#777" stroke-width="1.6"/></svg>
<div style="position:absolute;left:819px;top:688px;width:2px;height:2px;background:#a8a8a8;"></div>
<div style="position:absolute;left:819px;top:692px;width:2px;height:2px;background:#a8a8a8;"></div>
<div style="position:absolute;left:819px;top:696px;width:2px;height:2px;background:#a8a8a8;"></div>
<div style="position:absolute;left:836px;top:685px;width:508px;height:13px;background:#fff;border:1px solid #ababab;"></div>
<div style="position:absolute;left:850px;top:686px;width:1px;height:13px;background:#ababab;"></div>
<svg style="position:absolute;left:840px;top:688px;" width="5" height="8" viewBox="0 0 5 8"><path d="M5 0 L0 4 L5 8 Z" fill="#606060"/></svg>
<div style="position:absolute;left:1303px;top:686px;width:27px;height:13px;background:#dadada;"></div>
<div style="position:absolute;left:1330px;top:685px;width:13px;height:13px;background:#fff;border:1px solid #ababab;"></div>
<svg style="position:absolute;left:1336px;top:688px;" width="5" height="8" viewBox="0 0 5 8"><path d="M0 0 L5 4 L0 8 Z" fill="#606060"/></svg>
<div style="position:absolute;left:0px;top:707px;width:1366px;height:21px;background:#f3f3f3;"></div>
<div style="position:absolute;left:7.40px;top:708.00px;line-height:16px;color:#333;font-family:'Liberation Sans',sans-serif;font-size:12px;font-weight:400;font-style:normal;white-space:pre;transform:scaleX(0.9196);transform-origin:left top;">Ready</div>
<div style="position:absolute;left:1080px;top:707px;width:38px;height:21px;background:#c8c8c8;"></div>
<svg style="position:absolute;left:1092px;top:710px;" width="13" height="13" viewBox="0 0 13 13"><path d="M0.5 0.5 H12.5 V12.5 H0.5 Z M4.5 0.5 V12.5 M8.5 0.5 V12.5 M0.5 4.5 H12.5 M0.5 8.5 H12.5" fill="none" stroke="#555" stroke-width="1"/></svg>
<svg style="position:absolute;left:1130px;top:710px;" width="14" height="13" viewBox="0 0 14 13"><rect x="0.5" y="0.5" width="13" height="12" fill="none" stroke="#555"/><rect x="3.5" y="2.5" width="7" height="8" fill="none" stroke="#555"/><path d="M5 5 H9 M5 7 H9" stroke="#555"/></svg>
<svg style="position:absolute;left:1168px;top:710px;" width="14" height="13" viewBox="0 0 14 13"><rect x="0.5" y="0.5" width="13" height="12" fill="none" stroke="#555"/><path d="M0.5 8.5 H8.5 V0.5 M4.5 0.5 V8.5" fill="none" stroke="#555"/></svg>
<div style="position:absolute;left:1199px;top:716px;width:6px;height:2px;background:#555;"></div>
<div style="position:absolute;left:1209px;top:716px;width:100px;height:1px;background:#a0a0a0;"></div>
<div style="position:absolute;left:1258px;top:711px;width:4px;height:10px;background:#6a6a6a;"></div>
<div style="position:absolute;left:1312px;top:716px;width:8px;height:2px;background:#555;"></div>
<div style="position:absolute;left:1315px;top:713px;width:2px;height:8px;background:#555;"></div>
<div style="position:absolute;left:1331.00px;top:710.00px;line-height:15px;color:#333;font-family:'Liberation Sans',sans-serif;font-size:11.5px;font-weight:400;font-style:normal;white-space:pre;transform:scaleX(0.9347);transform-origin:left top;">100%</div>
<div style="position:absolute;left:1073.70px;top:650.00px;line-height:25px;color:rgba(120,120,120,0.45);font-family:'Liberation Sans',sans-serif;font-size:19.5px;font-weight:400;font-style:normal;white-space:pre;transform:scaleX(1.0118);transform-origin:left top;">Activate Windows</div>
<div style="position:absolute;left:1073.70px;top:676.00px;line-height:18px;color:rgba(120,120,120,0.42);font-family:'Liberation Sans',sans-serif;font-size:14px;font-weight:400;font-style:normal;white-space:pre;transform:scaleX(1.0620);transform-origin:left top;">Go to Settings to activate Windows.</div>
<div style="position:absolute;left:0px;top:728px;width:1366px;height:40px;background:#000000;"></div>
<div style="position:absolute;left:48px;top:728px;width:344px;height:40px;background:#333333;"></div>
<svg style="position:absolute;left:16px;top:740px;" width="17" height="17" viewBox="0 0 17 17"><path d="M0 2.3 L6.8 1.3 V7.7 H0 Z M7.7 1.2 L16 0 V7.7 H7.7 Z M0 8.6 H6.8 V15 L0 14 Z M7.7 8.6 H16 V16.3 L7.7 15.1 Z" fill="#fff"/></svg>
<div style="position:absolute;left:60.00px;top:738.00px;line-height:20px;color:#a6a6a6;font-family:'Liberation Sans',sans-serif;font-size:15px;font-weight:400;font-style:normal;white-space:pre;transform:scaleX(0.9826);transform-origin:left top;">Search the web and Windows</div>
<svg style="position:absolute;left:404px;top:740px;" width="23" height="16" viewBox="0 0 23 16"><rect x="5" y="1" width="13" height="14" fill="none" stroke="#fff" stroke-width="1.3"/><path d="M2.5 3 H1 V13 H2.5 M20.5 3 H22 V13 H20.5" fill="none" stroke="#fff" stroke-width="1.3"/></svg>
<svg style="position:absolute;left:454px;top:737px;" width="24" height="22" viewBox="0 0 24 22"><path d="M22 13 H6 C6.5 17 9.5 19 13 19 C16 19 18.5 18 21 16.5 V20.5 C18.5 21.7 16 22 13 22 C6 22 1.5 17.5 1.5 11 C1.5 4.5 6.5 0 12.5 0 C18.5 0 22.5 4 22.5 10.5 Z M6.2 9.5 H17.5 C17.3 6 15.2 3.8 12 3.8 C8.8 3.8 6.6 6 6.2 9.5 Z" fill="#1e88e5"/></svg>
<svg style="position:absolute;left:503px;top:737px;" width="24" height="22" viewBox="0 0 24 22"><path d="M1 3 H9 L11 5 H23 V20 H1 Z" fill="#f0c35c"/><path d="M1 7 H23 V20 H1 Z" fill="#ffd969"/><path d="M6 20 V13 H18 V20 H15 V16 H9 V20 Z" fill="#3aa3d9"/></svg>
<div style="position:absolute;left:495px;top:766px;width:40px;height:2px;background:#76b9ed;"></div>
<svg style="position:absolute;left:552px;top:735px;" width="23" height="25" viewBox="0 0 23 25"><path d="M7 7 C7 3 9 1.2 11.5 1.2 C14 1.2 16 3 16 7" fill="none" stroke="#fff" stroke-width="1.6"/><path d="M1 7 H22 V24 H1 Z" fill="#fff"/><path d="M6.5 10.5 H11 V15 H6.5 Z M12 10.5 H16.5 V15 H12 Z M6.5 16 H11 V20.5 H6.5 Z M12 16 H16.5 V20.5 H12 Z" fill="#000"/></svg>
<div style="position:absolute;left:589px;top:728px;width:48px;height:40px;background:#333333;"></div>
<div style="position:absolute;left:589px;top:766px;width:48px;height:2px;background:#76b9ed;"></div>
<svg style="position:absolute;left:600px;top:737px;" width="26" height="22" viewBox="0 0 26 22"><rect x="7" y="0" width="19" height="22" rx="1" fill="#21a366"/><rect x="7" y="0" width="19" height="7" fill="#33c481"/><rect x="7" y="14" width="19" height="8" fill="#185c37"/><rect x="0" y="4" width="14" height="14" rx="1" fill="#107c41"/><text x="3" y="15.5" font-family="Liberation Sans" font-weight="bold" font-size="11" fill="#fff">X</text></svg>
<svg style="position:absolute;left:650px;top:737px;" width="24" height="24" viewBox="0 0 24 24"><circle cx="12" cy="12" r="11.5" fill="#db4437"/><path d="M12 12 L1.9 6.2 A11.5 11.5 0 0 0 9 23.1 Z" fill="#0f9d58"/><path d="M12 12 L9 23.1 A11.5 11.5 0 0 0 22.1 6.2 Z" fill="#ffcd40"/><path d="M12 12 L22.1 6.2 A11.5 11.5 0 0 0 1.9 6.2 Z" fill="#db4437"/><circle cx="12" cy="12" r="5.2" fill="#fff"/><circle cx="12" cy="12" r="4.1" fill="#4285f4"/></svg>
<div style="position:absolute;left:642px;top:766px;width:40px;height:2px;background:#76b9ed;"></div>
<svg style="position:absolute;left:698px;top:736px;" width="26" height="24" viewBox="0 0 26 24"><ellipse cx="9.5" cy="9" rx="9" ry="7.5" fill="#5ac83c"/><path d="M4 14 L3 18 L7.5 15.5 Z" fill="#5ac83c"/><ellipse cx="17" cy="15.5" rx="8" ry="6.5" fill="#f2f2f2"/><path d="M21 20 L23 23 L18.5 21.5 Z" fill="#f2f2f2"/><circle cx="6.5" cy="7.5" r="1.2" fill="#1c4a14"/><circle cx="12.5" cy="7.5" r="1.2" fill="#1c4a14"/><circle cx="14.5" cy="14.5" r="1" fill="#777"/><circle cx="19.5" cy="14.5" r="1" fill="#777"/></svg>
<div style="position:absolute;left:691px;top:766px;width:40px;height:2px;background:#76b9ed;"></div>
<svg style="position:absolute;left:1176px;top:744px;" width="14" height="8" viewBox="0 0 14 8"><path d="M1 7 L7 1 L13 7" fill="none" stroke="#fff" stroke-width="1.2"/></svg>
<svg style="position:absolute;left:1198px;top:742px;" width="18" height="12" viewBox="0 0 18 12"><path d="M2 0.5 V3 M5 0.5 V3 M1 3 H6 V6 C6 7 5 8 3.5 8 C2 8 1 7 1 6 Z M3.5 8 V11.5" fill="none" stroke="#fff" stroke-width="1"/><rect x="6.5" y="3.5" width="10" height="7" fill="none" stroke="#fff" stroke-width="1"/><rect x="7.5" y="4.5" width="8" height="5" fill="#fff"/><rect x="16.5" y="5.5" width="1.5" height="3" fill="#fff"/></svg>
<svg style="position:absolute;left:1225px;top:741px;" width="15" height="14" viewBox="0 0 15 14"><path d="M1 13 C1 6 6 1 13 1 M3.5 13 C3.5 7.5 7.5 3.5 13 3.5 M6 13 C6 9 9 6 13 6 M8.5 13 C8.5 10.5 10.5 8.5 13 8.5" fill="none" stroke="#fff" stroke-width="1"/><rect x="10" y="10" width="4" height="4" fill="#fff"/></svg>
<svg style="position:absolute;left:1247px;top:741px;" width="17" height="14" viewBox="0 0 17 14"><path d="M1 4.5 H4 L8 1 V13 L4 9.5 H1 Z" fill="none" stroke="#fff" stroke-width="1"/><path d="M10.5 4.5 C11.5 6 11.5 8 10.5 9.5 M12.5 3 C14 5.5 14 8.5 12.5 11 M14.5 1.5 C16.5 5 16.5 9 14.5 12.5" fill="none" stroke="#fff" stroke-width="1"/></svg>
<svg style="position:absolute;left:1270px;top:740px;" width="17" height="17" viewBox="0 0 17 17"><path d="M0.5 0.5 H16.5 V12.5 H10.5 L8.5 15.5 L6.5 12.5 H0.5 Z" fill="none" stroke="#fff" stroke-width="1.1"/><path d="M3.5 4 H13.5 M3.5 6.5 H13.5 M3.5 9 H10" stroke="#fff" stroke-width="1"/></svg>
<div style="position:absolute;left:1301.80px;top:732.00px;line-height:16px;color:#fff;font-family:'Liberation Sans',sans-serif;font-size:12.5px;font-weight:400;font-style:normal;white-space:pre;transform:scaleX(0.9231);transform-origin:left top;">11:30 AM</div>
<div style="position:absolute;left:1302.50px;top:748.00px;line-height:16px;color:#fff;font-family:'Liberation Sans',sans-serif;font-size:12.5px;font-weight:400;font-style:normal;white-space:pre;transform:scaleX(0.9615);transform-origin:left top;">3/1/2020</div>
<div style="position:absolute;left:1361px;top:728px;width:1px;height:40px;background:#555;"></div>
</body></html>
